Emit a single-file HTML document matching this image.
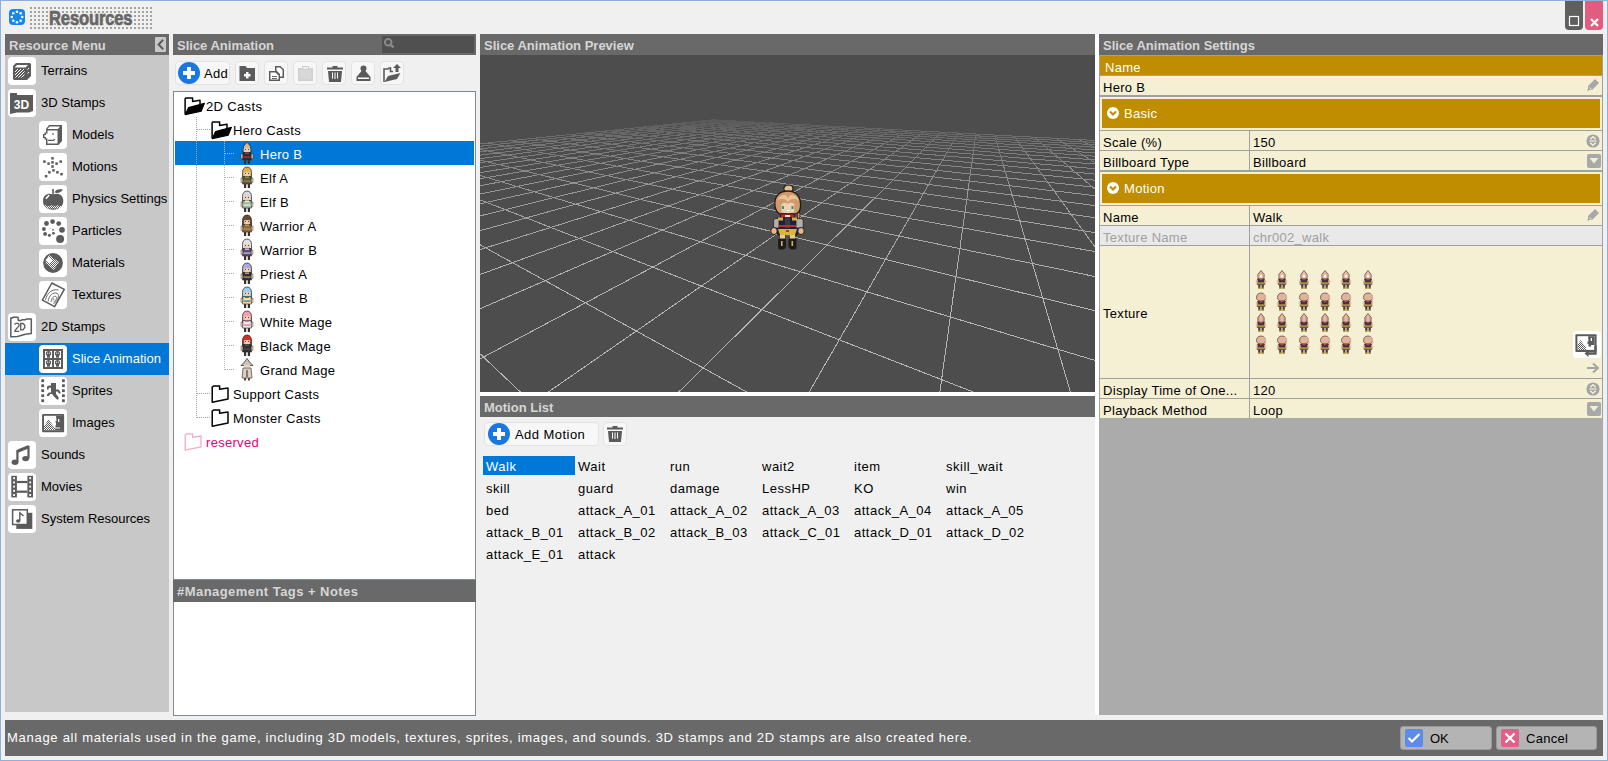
<!DOCTYPE html>
<html><head><meta charset="utf-8"><style>
*{margin:0;padding:0;box-sizing:border-box}
html,body{width:1608px;height:761px;overflow:hidden;background:#f0f0f0;font-family:"Liberation Sans",sans-serif;font-size:13px;color:#000}
.a{position:absolute;display:block}
.win{position:absolute;left:0;top:0;width:1608px;height:761px;border:1px solid #8fb0d8;background:#f0f0f0}
.hdr{position:absolute;height:21px;background:#696969;color:#d6d6d6;font-weight:bold;font-size:13px;line-height:23px;padding-left:4px;white-space:nowrap}
.t{position:absolute;white-space:nowrap;line-height:18px}
</style></head><body>
<div class="win"></div>
<svg class="a" style="left:9px;top:9px" width="16" height="16" viewBox="0 0 16 16"><rect width="16" height="16" rx="4" fill="#1486f2"/><circle cx="13.20" cy="8.00" r="1.3" fill="#fff"/><circle cx="11.68" cy="11.68" r="1.3" fill="#fff"/><circle cx="8.00" cy="13.20" r="1.3" fill="#fff"/><circle cx="4.32" cy="11.68" r="1.3" fill="#fff"/><circle cx="2.80" cy="8.00" r="1.3" fill="#fff"/><circle cx="4.32" cy="4.32" r="1.3" fill="#fff"/><circle cx="8.00" cy="2.80" r="1.3" fill="#fff"/><circle cx="11.68" cy="4.32" r="1.3" fill="#fff"/></svg>
<svg class="a" style="left:29px;top:6px" width="124" height="25" fill="#a2a2a2"><rect x="1" y="1" width="2" height="2"/><rect x="5" y="1" width="2" height="2"/><rect x="9" y="1" width="2" height="2"/><rect x="13" y="1" width="2" height="2"/><rect x="17" y="1" width="2" height="2"/><rect x="21" y="1" width="2" height="2"/><rect x="25" y="1" width="2" height="2"/><rect x="29" y="1" width="2" height="2"/><rect x="33" y="1" width="2" height="2"/><rect x="37" y="1" width="2" height="2"/><rect x="41" y="1" width="2" height="2"/><rect x="45" y="1" width="2" height="2"/><rect x="49" y="1" width="2" height="2"/><rect x="53" y="1" width="2" height="2"/><rect x="57" y="1" width="2" height="2"/><rect x="61" y="1" width="2" height="2"/><rect x="65" y="1" width="2" height="2"/><rect x="69" y="1" width="2" height="2"/><rect x="73" y="1" width="2" height="2"/><rect x="77" y="1" width="2" height="2"/><rect x="81" y="1" width="2" height="2"/><rect x="85" y="1" width="2" height="2"/><rect x="89" y="1" width="2" height="2"/><rect x="93" y="1" width="2" height="2"/><rect x="97" y="1" width="2" height="2"/><rect x="101" y="1" width="2" height="2"/><rect x="105" y="1" width="2" height="2"/><rect x="109" y="1" width="2" height="2"/><rect x="113" y="1" width="2" height="2"/><rect x="117" y="1" width="2" height="2"/><rect x="121" y="1" width="2" height="2"/><rect x="1" y="5" width="2" height="2"/><rect x="5" y="5" width="2" height="2"/><rect x="9" y="5" width="2" height="2"/><rect x="13" y="5" width="2" height="2"/><rect x="17" y="5" width="2" height="2"/><rect x="21" y="5" width="2" height="2"/><rect x="25" y="5" width="2" height="2"/><rect x="29" y="5" width="2" height="2"/><rect x="33" y="5" width="2" height="2"/><rect x="37" y="5" width="2" height="2"/><rect x="41" y="5" width="2" height="2"/><rect x="45" y="5" width="2" height="2"/><rect x="49" y="5" width="2" height="2"/><rect x="53" y="5" width="2" height="2"/><rect x="57" y="5" width="2" height="2"/><rect x="61" y="5" width="2" height="2"/><rect x="65" y="5" width="2" height="2"/><rect x="69" y="5" width="2" height="2"/><rect x="73" y="5" width="2" height="2"/><rect x="77" y="5" width="2" height="2"/><rect x="81" y="5" width="2" height="2"/><rect x="85" y="5" width="2" height="2"/><rect x="89" y="5" width="2" height="2"/><rect x="93" y="5" width="2" height="2"/><rect x="97" y="5" width="2" height="2"/><rect x="101" y="5" width="2" height="2"/><rect x="105" y="5" width="2" height="2"/><rect x="109" y="5" width="2" height="2"/><rect x="113" y="5" width="2" height="2"/><rect x="117" y="5" width="2" height="2"/><rect x="121" y="5" width="2" height="2"/><rect x="1" y="9" width="2" height="2"/><rect x="5" y="9" width="2" height="2"/><rect x="9" y="9" width="2" height="2"/><rect x="13" y="9" width="2" height="2"/><rect x="17" y="9" width="2" height="2"/><rect x="21" y="9" width="2" height="2"/><rect x="25" y="9" width="2" height="2"/><rect x="29" y="9" width="2" height="2"/><rect x="33" y="9" width="2" height="2"/><rect x="37" y="9" width="2" height="2"/><rect x="41" y="9" width="2" height="2"/><rect x="45" y="9" width="2" height="2"/><rect x="49" y="9" width="2" height="2"/><rect x="53" y="9" width="2" height="2"/><rect x="57" y="9" width="2" height="2"/><rect x="61" y="9" width="2" height="2"/><rect x="65" y="9" width="2" height="2"/><rect x="69" y="9" width="2" height="2"/><rect x="73" y="9" width="2" height="2"/><rect x="77" y="9" width="2" height="2"/><rect x="81" y="9" width="2" height="2"/><rect x="85" y="9" width="2" height="2"/><rect x="89" y="9" width="2" height="2"/><rect x="93" y="9" width="2" height="2"/><rect x="97" y="9" width="2" height="2"/><rect x="101" y="9" width="2" height="2"/><rect x="105" y="9" width="2" height="2"/><rect x="109" y="9" width="2" height="2"/><rect x="113" y="9" width="2" height="2"/><rect x="117" y="9" width="2" height="2"/><rect x="121" y="9" width="2" height="2"/><rect x="1" y="13" width="2" height="2"/><rect x="5" y="13" width="2" height="2"/><rect x="9" y="13" width="2" height="2"/><rect x="13" y="13" width="2" height="2"/><rect x="17" y="13" width="2" height="2"/><rect x="21" y="13" width="2" height="2"/><rect x="25" y="13" width="2" height="2"/><rect x="29" y="13" width="2" height="2"/><rect x="33" y="13" width="2" height="2"/><rect x="37" y="13" width="2" height="2"/><rect x="41" y="13" width="2" height="2"/><rect x="45" y="13" width="2" height="2"/><rect x="49" y="13" width="2" height="2"/><rect x="53" y="13" width="2" height="2"/><rect x="57" y="13" width="2" height="2"/><rect x="61" y="13" width="2" height="2"/><rect x="65" y="13" width="2" height="2"/><rect x="69" y="13" width="2" height="2"/><rect x="73" y="13" width="2" height="2"/><rect x="77" y="13" width="2" height="2"/><rect x="81" y="13" width="2" height="2"/><rect x="85" y="13" width="2" height="2"/><rect x="89" y="13" width="2" height="2"/><rect x="93" y="13" width="2" height="2"/><rect x="97" y="13" width="2" height="2"/><rect x="101" y="13" width="2" height="2"/><rect x="105" y="13" width="2" height="2"/><rect x="109" y="13" width="2" height="2"/><rect x="113" y="13" width="2" height="2"/><rect x="117" y="13" width="2" height="2"/><rect x="121" y="13" width="2" height="2"/><rect x="1" y="17" width="2" height="2"/><rect x="5" y="17" width="2" height="2"/><rect x="9" y="17" width="2" height="2"/><rect x="13" y="17" width="2" height="2"/><rect x="17" y="17" width="2" height="2"/><rect x="21" y="17" width="2" height="2"/><rect x="25" y="17" width="2" height="2"/><rect x="29" y="17" width="2" height="2"/><rect x="33" y="17" width="2" height="2"/><rect x="37" y="17" width="2" height="2"/><rect x="41" y="17" width="2" height="2"/><rect x="45" y="17" width="2" height="2"/><rect x="49" y="17" width="2" height="2"/><rect x="53" y="17" width="2" height="2"/><rect x="57" y="17" width="2" height="2"/><rect x="61" y="17" width="2" height="2"/><rect x="65" y="17" width="2" height="2"/><rect x="69" y="17" width="2" height="2"/><rect x="73" y="17" width="2" height="2"/><rect x="77" y="17" width="2" height="2"/><rect x="81" y="17" width="2" height="2"/><rect x="85" y="17" width="2" height="2"/><rect x="89" y="17" width="2" height="2"/><rect x="93" y="17" width="2" height="2"/><rect x="97" y="17" width="2" height="2"/><rect x="101" y="17" width="2" height="2"/><rect x="105" y="17" width="2" height="2"/><rect x="109" y="17" width="2" height="2"/><rect x="113" y="17" width="2" height="2"/><rect x="117" y="17" width="2" height="2"/><rect x="121" y="17" width="2" height="2"/><rect x="1" y="21" width="2" height="2"/><rect x="5" y="21" width="2" height="2"/><rect x="9" y="21" width="2" height="2"/><rect x="13" y="21" width="2" height="2"/><rect x="17" y="21" width="2" height="2"/><rect x="21" y="21" width="2" height="2"/><rect x="25" y="21" width="2" height="2"/><rect x="29" y="21" width="2" height="2"/><rect x="33" y="21" width="2" height="2"/><rect x="37" y="21" width="2" height="2"/><rect x="41" y="21" width="2" height="2"/><rect x="45" y="21" width="2" height="2"/><rect x="49" y="21" width="2" height="2"/><rect x="53" y="21" width="2" height="2"/><rect x="57" y="21" width="2" height="2"/><rect x="61" y="21" width="2" height="2"/><rect x="65" y="21" width="2" height="2"/><rect x="69" y="21" width="2" height="2"/><rect x="73" y="21" width="2" height="2"/><rect x="77" y="21" width="2" height="2"/><rect x="81" y="21" width="2" height="2"/><rect x="85" y="21" width="2" height="2"/><rect x="89" y="21" width="2" height="2"/><rect x="93" y="21" width="2" height="2"/><rect x="97" y="21" width="2" height="2"/><rect x="101" y="21" width="2" height="2"/><rect x="105" y="21" width="2" height="2"/><rect x="109" y="21" width="2" height="2"/><rect x="113" y="21" width="2" height="2"/><rect x="117" y="21" width="2" height="2"/><rect x="121" y="21" width="2" height="2"/></svg>
<div class="t" style="left:49px;top:6px;font-size:20px;font-weight:bold;color:#666;line-height:24px;letter-spacing:-0.2px;transform:scaleX(0.83);transform-origin:left;-webkit-text-stroke:0.7px #666;text-shadow:1px 0 #f0f0f0,-1px 0 #f0f0f0,0 1px #f0f0f0,0 -1px #f0f0f0,1px 1px #f0f0f0,-1px -1px #f0f0f0,1px -1px #f0f0f0,-1px 1px #f0f0f0">Resources</div>
<svg class="a" style="left:1565px;top:1px" width="18" height="29"><path d="M0 0H18V25A4 4 0 0 1 14 29H4A4 4 0 0 1 0 25Z" fill="#5f5f5f"/><rect x="4.5" y="15.5" width="9" height="9" fill="none" stroke="#fff" stroke-width="1.2"/></svg>
<svg class="a" style="left:1585px;top:1px" width="18" height="29"><path d="M0 0H18V25A4 4 0 0 1 14 29H4A4 4 0 0 1 0 25Z" fill="#e05c80"/><path d="M6 18L13 25M13 18L6 25" stroke="#fff" stroke-width="2.2"/></svg>
<div class="hdr" style="left:5px;top:34px;width:164px">Resource Menu</div>
<div class="a" style="left:155px;top:37px;width:11px;height:15px;background:#c8c8c8;border-radius:1px"></div>
<svg class="a" style="left:155px;top:37px" width="11" height="15"><path d="M8.2 2.8L3.6 7.5L8.2 12.2" stroke="#5b5b5b" stroke-width="2" fill="none"/></svg>
<div class="a" style="left:5px;top:55px;width:164px;height:657px;background:#c8c8c8"></div>
<svg class="a" style="left:8px;top:57px" width="28" height="28" viewBox="0 0 28 28"><rect x="0" y="0" width="28" height="28" rx="4" fill="#fff"/><path d="M8 6H22L23 7V19L19 23H6L5 22V9Z" fill="#5b5b5b"/>
<path d="M9 8H20L17.5 10.5H6.5Z" fill="#fff"/>
<g stroke="#fff" stroke-width="1"><path d="M7 15L10 12M7 18L13 12M7.5 20.5L16 12M10.5 20.5L16.5 14.5M13.5 20.5L16.5 17.5"/><path d="M19.5 12.5L21 11M19.5 16.5L21 15"/></g></svg>
<div class="t" style="left:41px;top:62px;color:#000">Terrains</div>
<svg class="a" style="left:8px;top:89px" width="28" height="28" viewBox="0 0 28 28"><rect x="0" y="0" width="28" height="28" rx="4" fill="#fff"/><path d="M2 4H9V6H25V22L21 23.5H9L2 25Z" fill="#5b5b5b"/>
<text x="13.5" y="19.5" font-family="Liberation Sans" font-weight="bold" font-size="12" fill="#fff" text-anchor="middle">3D</text></svg>
<div class="t" style="left:41px;top:94px;color:#000">3D Stamps</div>
<svg class="a" style="left:39px;top:121px" width="28" height="28" viewBox="0 0 28 28"><rect x="0" y="0" width="28" height="28" rx="4" fill="#fff"/><path d="M10 4H23V20L19.5 24H7V18.5H5.5V17H4V13H5.5V11.5H7V8Z" fill="#5b5b5b"/>
<path d="M8.5 9.5H18.5V22.5H8.5V17.5H7V16H5.5V14H7V12.5H8.5Z" fill="#fff"/><path d="M10.5 5.5H21L19 8H8.5Z" fill="#fff"/>
<rect x="13.3" y="12.3" width="1.5" height="1.5" fill="#5b5b5b"/><path d="M9 19.3H14.5L16 18.3" stroke="#5b5b5b" stroke-width="1.2" fill="none"/></svg>
<div class="t" style="left:72px;top:126px;color:#000">Models</div>
<svg class="a" style="left:39px;top:153px" width="28" height="28" viewBox="0 0 28 28"><rect x="0" y="0" width="28" height="28" rx="4" fill="#fff"/><rect x="12.25" y="4.05" width="2.5" height="2.5" fill="#5b5b5b"/><rect x="4.15" y="7.35" width="2.5" height="2.5" fill="#5b5b5b"/><rect x="8.35" y="9.35" width="2.5" height="2.5" fill="#5b5b5b"/><rect x="12.25" y="8.15" width="2.5" height="2.5" fill="#5b5b5b"/><rect x="16.35" y="9.35" width="2.5" height="2.5" fill="#5b5b5b"/><rect x="20.45" y="7.35" width="2.5" height="2.5" fill="#5b5b5b"/><rect x="12.25" y="12.25" width="2.5" height="2.5" fill="#5b5b5b"/><rect x="13.25" y="16.15" width="2.5" height="2.5" fill="#5b5b5b"/><rect x="9.15" y="18.05" width="2.5" height="2.5" fill="#5b5b5b"/><rect x="17.15" y="18.05" width="2.5" height="2.5" fill="#5b5b5b"/><rect x="5.85" y="21.95" width="2.5" height="2.5" fill="#5b5b5b"/><rect x="21.25" y="19.95" width="2.5" height="2.5" fill="#5b5b5b"/></svg>
<div class="t" style="left:72px;top:158px;color:#000">Motions</div>
<svg class="a" style="left:39px;top:185px" width="28" height="28" viewBox="0 0 28 28"><rect x="0" y="0" width="28" height="28" rx="4" fill="#fff"/><defs><pattern id="dith" width="2" height="2" patternUnits="userSpaceOnUse"><rect x="0" y="0" width="1" height="1" fill="#fff"/><rect x="1" y="1" width="1" height="1" fill="#fff"/></pattern></defs>
<rect x="13.2" y="4" width="1.6" height="5.5" fill="#5b5b5b"/><path d="M15.5 7.5C16.5 4.5 19.5 3.5 24 4.5C22 7.5 19 8.5 15.5 7.5Z" fill="#5b5b5b"/>
<path d="M14 9.5C10 7.5 4 9 4 16C4 21 7.5 24.7 14 24.7C20.5 24.7 24.3 21 24.3 16C24.3 9 18 7.5 14 9.5Z" fill="#5b5b5b"/>
<path d="M7.3 13.2L9.8 10.5" stroke="#fff" stroke-width="1.6" stroke-linecap="round"/>
<path d="M5 21.5L6.5 20L8 21.5L9.5 20L11 21.5L12.5 20L14 21.5L15.5 20L17 21.5L18.5 20L20 21.5L21.5 20L23 21.5V23.5H5Z" fill="url(#dith)"/></svg>
<div class="t" style="left:72px;top:190px;color:#000">Physics Settings</div>
<svg class="a" style="left:39px;top:217px" width="28" height="28" viewBox="0 0 28 28"><rect x="0" y="0" width="28" height="28" rx="4" fill="#fff"/><circle cx="7.5" cy="6.5" r="2.4" fill="#5b5b5b"/><circle cx="13.6" cy="4.6" r="2.4" fill="#5b5b5b"/><circle cx="19.7" cy="6.6" r="2.4" fill="#5b5b5b"/>
<circle cx="4.9" cy="12" r="1.9" fill="#5b5b5b"/><circle cx="23" cy="12.8" r="2.9" fill="#5b5b5b"/><circle cx="6.1" cy="16.9" r="1.9" fill="#5b5b5b"/>
<circle cx="10.4" cy="18.3" r="1.5" fill="#5b5b5b"/><circle cx="14.4" cy="16.3" r="1.4" fill="#5b5b5b"/><circle cx="14" cy="12.8" r="0.9" fill="#5b5b5b"/><circle cx="11.2" cy="11.6" r="0.45" fill="#5b5b5b"/>
<circle cx="21.1" cy="21.9" r="4" fill="#5b5b5b"/></svg>
<div class="t" style="left:72px;top:222px;color:#000">Particles</div>
<svg class="a" style="left:39px;top:249px" width="28" height="28" viewBox="0 0 28 28"><rect x="0" y="0" width="28" height="28" rx="4" fill="#fff"/><defs><pattern id="dith2" width="2" height="2" patternUnits="userSpaceOnUse"><rect x="0" y="0" width="1" height="1" fill="#fff"/><rect x="1" y="1" width="1" height="1" fill="#fff"/></pattern></defs>
<circle cx="14" cy="14" r="9.9" fill="#5b5b5b"/>
<path d="M10 6L20 13L15 21L6 14Z" fill="url(#dith2)"/><path d="M10 7.5L13.5 11L10 14.5L6.5 11Z" fill="#fff"/></svg>
<div class="t" style="left:72px;top:254px;color:#000">Materials</div>
<svg class="a" style="left:39px;top:281px" width="28" height="28" viewBox="0 0 28 28"><rect x="0" y="0" width="28" height="28" rx="4" fill="#fff"/><path d="M12.8 2L25.3 8.4L15.6 25.6L3.4 19.1Z" fill="none" stroke="#5b5b5b" stroke-width="1.5" stroke-linejoin="round"/>
<g fill="none" stroke="#5b5b5b" stroke-width="0.9"><path d="M6.5 19C8 12 13 7.5 19.5 9"/><path d="M9 20.5C10 14.5 14 10.5 18.5 12.5C21 14 18.5 21 14.5 22.5"/><path d="M12 21C12.5 17 15 14.5 17 15.5C18.5 16.5 16.5 20.5 14.5 21"/><path d="M14.5 17.5L14 19.5"/></g></svg>
<div class="t" style="left:72px;top:286px;color:#000">Textures</div>
<svg class="a" style="left:8px;top:313px" width="28" height="28" viewBox="0 0 28 28"><rect x="0" y="0" width="28" height="28" rx="4" fill="#fff"/><path d="M2.8 23.8V5H4.4L5 4.2H10L10.3 7.5H13L14 6.8H17L18.5 6H23.3V20.5L19 21L16.5 21.5L13 22.5L9.5 23.5Z" fill="none" stroke="#5b5b5b" stroke-width="1.5" stroke-linejoin="round"/>
<path d="M6.5 11.5L8 10.3H10L11 11.2V12.8L7 17.5V18.3H11.3" fill="none" stroke="#5b5b5b" stroke-width="1.3"/><path d="M12.7 10.5H15L16.8 12.3V14.5L15 16.8H12.7Z" fill="none" stroke="#5b5b5b" stroke-width="1.3"/></svg>
<div class="t" style="left:41px;top:318px;color:#000">2D Stamps</div>
<div class="a" style="left:5px;top:343px;width:164px;height:32px;background:#0078d7"></div>
<svg class="a" style="left:39px;top:345px" width="28" height="28" viewBox="0 0 28 28"><rect x="0" y="0" width="28" height="28" rx="4" fill="#fff"/><rect x="4" y="4" width="20" height="20" fill="#5b5b5b"/><rect x="6" y="6" width="7" height="7" fill="#fff"/><rect x="15" y="6" width="7" height="7" fill="#fff"/><rect x="6" y="15" width="7" height="7" fill="#fff"/><rect x="15" y="15" width="7" height="7" fill="#fff"/>
<circle cx="9.5" cy="8.5" r="2.6" fill="#5b5b5b"/><rect x="8.0" y="10.5" width="3" height="2.2" fill="#5b5b5b"/><rect x="8.1" y="7.7" width="1" height="1" fill="#fff"/><rect x="9.9" y="7.7" width="1" height="1" fill="#fff"/><circle cx="18.5" cy="8.5" r="2.6" fill="#5b5b5b"/><rect x="17.0" y="10.5" width="3" height="2.2" fill="#5b5b5b"/><rect x="17.1" y="7.7" width="1" height="1" fill="#fff"/><rect x="18.9" y="7.7" width="1" height="1" fill="#fff"/><circle cx="9.5" cy="17.5" r="2.6" fill="#5b5b5b"/><rect x="8.0" y="19.5" width="3" height="2.2" fill="#5b5b5b"/><rect x="8.1" y="16.7" width="1" height="1" fill="#fff"/><rect x="9.9" y="16.7" width="1" height="1" fill="#fff"/><circle cx="18.5" cy="17.5" r="2.6" fill="#5b5b5b"/><rect x="17.0" y="19.5" width="3" height="2.2" fill="#5b5b5b"/><rect x="17.1" y="16.7" width="1" height="1" fill="#fff"/><rect x="18.9" y="16.7" width="1" height="1" fill="#fff"/></svg>
<div class="t" style="left:72px;top:350px;color:#fff">Slice Animation</div>
<svg class="a" style="left:39px;top:377px" width="28" height="28" viewBox="0 0 28 28"><rect x="0" y="0" width="28" height="28" rx="4" fill="#fff"/><rect x="2.3" y="2.3" width="2.8" height="2.8" fill="#5b5b5b"/><rect x="23" y="2.3" width="2.8" height="2.8" fill="#5b5b5b"/><rect x="2.3" y="7.3" width="2.8" height="2.8" fill="#5b5b5b"/><rect x="23" y="7.3" width="2.8" height="2.8" fill="#5b5b5b"/><rect x="2.3" y="12.3" width="2.8" height="2.8" fill="#5b5b5b"/><rect x="23" y="12.3" width="2.8" height="2.8" fill="#5b5b5b"/><rect x="2.3" y="17.3" width="2.8" height="2.8" fill="#5b5b5b"/><rect x="23" y="17.3" width="2.8" height="2.8" fill="#5b5b5b"/><rect x="2.3" y="22.3" width="2.8" height="2.8" fill="#5b5b5b"/><rect x="23" y="22.3" width="2.8" height="2.8" fill="#5b5b5b"/><path d="M12 6H17V12.5L19.5 12.5L21.5 15V16.5H20L18.5 14.5H17V17L19.5 20V22.5H18L15.5 20L13 17H11L10 19H8V17.5L10 15.5H12V11L10 10.5L9.5 12.5H8V9.5L10 8.5H12Z" fill="#5b5b5b"/></svg>
<div class="t" style="left:72px;top:382px;color:#000">Sprites</div>
<svg class="a" style="left:39px;top:409px" width="28" height="28" viewBox="0 0 28 28"><rect x="0" y="0" width="28" height="28" rx="4" fill="#fff"/><defs><pattern id="dith3" width="2" height="2" patternUnits="userSpaceOnUse"><rect x="0" y="0" width="1" height="1" fill="#5b5b5b"/><rect x="1" y="1" width="1" height="1" fill="#5b5b5b"/></pattern></defs>
<rect x="3.1" y="4.9" width="22" height="18.3" rx="1" fill="#5b5b5b"/><rect x="5" y="6.8" width="18" height="14.4" fill="#fff"/>
<path d="M5 21.2V17L9.5 10.5L16 19V21.2Z" fill="url(#dith3)"/><path d="M17 6.8H23V21.2H16V19.5H21V18.5H16.5V16H17V13.5H16.5V12H17.5Z" fill="#5b5b5b"/><rect x="19" y="10" width="1.3" height="3" fill="#fff"/></svg>
<div class="t" style="left:72px;top:414px;color:#000">Images</div>
<svg class="a" style="left:8px;top:441px" width="28" height="28" viewBox="0 0 28 28"><rect x="0" y="0" width="28" height="28" rx="4" fill="#fff"/><path d="M9.5 8.5L20.6 4V7.5L9.5 12Z" fill="#5b5b5b"/><rect x="8.3" y="9" width="2.2" height="12" fill="#5b5b5b"/><rect x="19.4" y="5" width="2.2" height="12.5" fill="#5b5b5b"/>
<ellipse cx="7" cy="21.2" rx="3.4" ry="2.7" fill="#5b5b5b"/><ellipse cx="17.6" cy="17.6" rx="3.4" ry="2.7" fill="#5b5b5b"/></svg>
<div class="t" style="left:41px;top:446px;color:#000">Sounds</div>
<svg class="a" style="left:8px;top:473px" width="28" height="28" viewBox="0 0 28 28"><rect x="0" y="0" width="28" height="28" rx="4" fill="#fff"/><rect x="3.3" y="2.8" width="5.6" height="21.6" fill="#5b5b5b"/><rect x="19.4" y="2.8" width="5.6" height="21.6" fill="#5b5b5b"/><rect x="5.2" y="4.2" width="1.8" height="2" fill="#fff"/><rect x="21.3" y="4.2" width="1.8" height="2" fill="#fff"/><rect x="5.2" y="8.4" width="1.8" height="2" fill="#fff"/><rect x="21.3" y="8.4" width="1.8" height="2" fill="#fff"/><rect x="5.2" y="12.6" width="1.8" height="2" fill="#fff"/><rect x="21.3" y="12.6" width="1.8" height="2" fill="#fff"/><rect x="5.2" y="16.8" width="1.8" height="2" fill="#fff"/><rect x="21.3" y="16.8" width="1.8" height="2" fill="#fff"/><rect x="5.2" y="21" width="1.8" height="2" fill="#fff"/><rect x="21.3" y="21" width="1.8" height="2" fill="#fff"/><rect x="8.9" y="7.9" width="10.5" height="2.2" fill="#5b5b5b"/><rect x="8.9" y="17.6" width="10.5" height="2.2" fill="#5b5b5b"/></svg>
<div class="t" style="left:41px;top:478px;color:#000">Movies</div>
<svg class="a" style="left:8px;top:505px" width="28" height="28" viewBox="0 0 28 28"><rect x="0" y="0" width="28" height="28" rx="4" fill="#fff"/><rect x="8.3" y="7.8" width="16" height="16.1" fill="#5b5b5b"/><rect x="4.6" y="4.8" width="14.7" height="14.7" fill="#fff" stroke="#5b5b5b" stroke-width="1.5"/>
<path d="M11.8 16V7.8L15.5 11" stroke="#5b5b5b" stroke-width="1.4" fill="none"/><ellipse cx="10.2" cy="16" rx="2.2" ry="1.8" fill="#5b5b5b"/></svg>
<div class="t" style="left:41px;top:510px;color:#000">System Resources</div>
<div class="hdr" style="left:173px;top:34px;width:303px">Slice Animation</div>
<div class="a" style="left:382px;top:36px;width:92px;height:17px;background:#505050"></div>
<svg class="a" style="left:383px;top:37px" width="14" height="14" viewBox="0 0 14 14"><circle cx="5.2" cy="5.2" r="3.3" fill="none" stroke="#8a8a8a" stroke-width="2"/><path d="M7.8 7.8L10.5 10.5" stroke="#8a8a8a" stroke-width="2.4"/></svg>
<div class="a" style="left:175px;top:61px;width:55px;height:24px;background:#f7f7f7;border:1px solid #e3e3e3;border-radius:4px"></div>
<svg class="a" style="left:178px;top:62px" width="22" height="22" viewBox="0 0 22 22"><circle cx="11" cy="11" r="11" fill="#1877e0"/><path d="M9 5H13V9H17V13H13V17H9V13H5V9H9Z" fill="#fff"/></svg>
<div class="t" style="left:204px;top:65px;letter-spacing:0.3px">Add</div>
<div class="a" style="left:235px;top:61px;width:24px;height:24px;background:#f7f7f7;border:1px solid #e3e3e3;border-radius:4px"></div>
<div class="a" style="left:264px;top:61px;width:24px;height:24px;background:#f7f7f7;border:1px solid #e3e3e3;border-radius:4px"></div>
<div class="a" style="left:293px;top:61px;width:24px;height:24px;background:#f7f7f7;border:1px solid #e3e3e3;border-radius:4px"></div>
<div class="a" style="left:322px;top:61px;width:24px;height:24px;background:#f7f7f7;border:1px solid #e3e3e3;border-radius:4px"></div>
<div class="a" style="left:351px;top:61px;width:24px;height:24px;background:#f7f7f7;border:1px solid #e3e3e3;border-radius:4px"></div>
<div class="a" style="left:380px;top:61px;width:24px;height:24px;background:#f7f7f7;border:1px solid #e3e3e3;border-radius:4px"></div>
<svg class="a" style="left:239px;top:65px" width="17" height="17" viewBox="0 0 17 17"><path d="M0.5 1H6.5L8 3H16V16H0.5Z" fill="#5b5b5b"/><path d="M7 7H9.5V9H11.5V11.5H9.5V13.5H7V11.5H5V9H7Z" fill="#fff"/></svg>
<svg class="a" style="left:268px;top:65px" width="17" height="17" viewBox="0 0 17 17"><path d="M7 1H12.5L16 4.5V13H12V16H1V6H7Z" fill="#5b5b5b"/><path d="M8.5 2.5H12L14.5 5V11.5H12V9L9 6H8.5Z" fill="#fff"/><path d="M2.5 7.5H7.5L10.5 10.5V14.5H2.5Z" fill="#fff"/><rect x="4" y="11" width="5" height="0.9" fill="#5b5b5b"/><rect x="4" y="13" width="5" height="0.9" fill="#5b5b5b"/></svg>
<svg class="a" style="left:297px;top:65px" width="17" height="17" viewBox="0 0 17 17"><rect x="1" y="3" width="15" height="13" fill="#cfcfcf"/><rect x="2.5" y="4.5" width="12" height="10" fill="#d8d8d8"/><rect x="5" y="1" width="7" height="4" fill="#cfcfcf"/><rect x="6" y="2" width="5" height="2" fill="#ececec"/></svg>
<svg class="a" style="left:326px;top:65px" width="18" height="18" viewBox="0 0 18 18"><rect x="6.5" y="1" width="5" height="2" fill="#5b5b5b"/><rect x="1" y="2.5" width="16" height="2" fill="#5b5b5b"/><path d="M2 6H16L15 17H3Z" fill="#5b5b5b"/><rect x="6" y="7.5" width="1" height="6" fill="#fff"/><rect x="8.5" y="7.5" width="1" height="6.5" fill="#fff"/><rect x="11" y="7.5" width="1" height="6" fill="#fff"/></svg>
<svg class="a" style="left:355px;top:65px" width="17" height="17" viewBox="0 0 17 17"><circle cx="8.5" cy="3.5" r="3" fill="#5b5b5b"/><path d="M6.5 6H10.5L15.5 12V16H1.5V12Z" fill="#5b5b5b"/><rect x="3" y="12.5" width="11" height="1.5" fill="#fff"/></svg>
<svg class="a" style="left:383px;top:63px" width="19" height="20" viewBox="0 0 19 20"><path d="M1 19V6H5L6 5H7.5V8.5H10" fill="none" stroke="#5b5b5b" stroke-width="1.6"/><path d="M1.5 19L5 13L17.5 10L14 16Z" fill="#5b5b5b"/><path d="M14 1L18 5H15.5V9H12.5V5H10Z" fill="#5b5b5b"/></svg>
<div class="a" style="left:173px;top:91px;width:303px;height:489px;background:#fff;border:1px solid #7f8893"></div>
<div class="a" style="left:175px;top:141px;width:299px;height:24px;background:#0078d7"></div>
<div class="a" style="left:196px;top:117px;width:1px;height:302px;background:repeating-linear-gradient(to bottom,#a0a0a0 0 1px,transparent 1px 2px)"></div>
<div class="a" style="left:197px;top:129px;width:14px;height:1px;background:repeating-linear-gradient(to right,#a0a0a0 0 1px,transparent 1px 2px)"></div>
<div class="a" style="left:197px;top:393px;width:14px;height:1px;background:repeating-linear-gradient(to right,#a0a0a0 0 1px,transparent 1px 2px)"></div>
<div class="a" style="left:197px;top:417px;width:14px;height:1px;background:repeating-linear-gradient(to right,#a0a0a0 0 1px,transparent 1px 2px)"></div>
<div class="a" style="left:224px;top:141px;width:1px;height:229px;background:repeating-linear-gradient(to bottom,#b8b8b8 0 1px,transparent 1px 2px)"></div>
<svg class="a" style="left:183px;top:97px" width="23" height="20" viewBox="0 0 23 20"><path d="M2.1 17.3V1.7L2.8 1H9.6V4.6L17 3.2V7.5" fill="none" stroke="#000" stroke-width="1.5" stroke-linejoin="round"/><path d="M2.3 17.6L5.6 10.6L21.4 6.2L18.2 14.3Z" fill="#000" stroke="#000" stroke-width="1.1" stroke-linejoin="round"/></svg>
<div class="t" style="left:206px;top:98px;letter-spacing:0.35px">2D Casts</div>
<svg class="a" style="left:210px;top:121px" width="23" height="20" viewBox="0 0 23 20"><path d="M2.1 17.3V1.7L2.8 1H9.6V4.6L17 3.2V7.5" fill="none" stroke="#000" stroke-width="1.5" stroke-linejoin="round"/><path d="M2.3 17.6L5.6 10.6L21.4 6.2L18.2 14.3Z" fill="#000" stroke="#000" stroke-width="1.1" stroke-linejoin="round"/></svg>
<div class="t" style="left:233px;top:122px;letter-spacing:0.3px">Hero Casts</div>
<div class="a" style="left:225px;top:153px;width:10px;height:1px;background:repeating-linear-gradient(to right,#b8b8b8 0 1px,transparent 1px 2px)"></div>
<svg class="a" style="left:240px;top:142px" width="14" height="23" viewBox="0 0 14 23"><path d="M7 0.5C9.5 2 11 5 11 8.5V10H3V8.5C3 5 4.5 2 7 0.5Z" fill="#e0b490" stroke="#2a2222" stroke-width="0.7"/><rect x="4.2" y="5.5" width="5.6" height="4.5" fill="#f0d0b0"/><rect x="4" y="4.5" width="6" height="1.6" fill="#e0b490"/><rect x="5" y="7" width="1" height="1" fill="#305060"/><rect x="8" y="7" width="1" height="1" fill="#305060"/><path d="M3 10.5H11L11.5 18H2.5Z" fill="#2a2a3a" stroke="#2a2222" stroke-width="0.6"/><rect x="5" y="10.5" width="4" height="1.5" fill="#c03030"/><rect x="3.5" y="14.5" width="7" height="1.2" fill="#c03030"/><rect x="1" y="12" width="1.8" height="4.5" fill="#f0d0b0" stroke="#2a2222" stroke-width="0.4"/><rect x="11.2" y="12" width="1.8" height="4.5" fill="#f0d0b0" stroke="#2a2222" stroke-width="0.4"/><rect x="4" y="18" width="2.2" height="4" fill="#3a3030"/><rect x="7.8" y="18" width="2.2" height="4" fill="#3a3030"/></svg>
<div class="t" style="left:260px;top:146px;letter-spacing:0.3px;color:#fff">Hero B</div>
<div class="a" style="left:225px;top:177px;width:10px;height:1px;background:repeating-linear-gradient(to right,#a8a8a8 0 1px,transparent 1px 2px)"></div>
<svg class="a" style="left:240px;top:166px" width="14" height="23" viewBox="0 0 14 23"><path d="M7 1C10 1 11.5 3.5 11.5 6.5V13H10V10H4V13H2.5V6.5C2.5 3.5 4 1 7 1Z" fill="#e0b050" stroke="#2a2222" stroke-width="0.7"/><rect x="4.2" y="5.5" width="5.6" height="4.5" fill="#f0d0b0"/><rect x="4" y="4.5" width="6" height="1.6" fill="#e0b050"/><rect x="5" y="7" width="1" height="1" fill="#305060"/><rect x="8" y="7" width="1" height="1" fill="#305060"/><path d="M3 10.5H11L11.5 18H2.5Z" fill="#5a5a38" stroke="#2a2222" stroke-width="0.6"/><rect x="5" y="10.5" width="4" height="1.5" fill="#a08a40"/><rect x="3.5" y="14.5" width="7" height="1.2" fill="#a08a40"/><rect x="1" y="12" width="1.8" height="4.5" fill="#f0d0b0" stroke="#2a2222" stroke-width="0.4"/><rect x="11.2" y="12" width="1.8" height="4.5" fill="#f0d0b0" stroke="#2a2222" stroke-width="0.4"/><rect x="4" y="18" width="2.2" height="4" fill="#3a3030"/><rect x="7.8" y="18" width="2.2" height="4" fill="#3a3030"/></svg>
<div class="t" style="left:260px;top:170px;letter-spacing:0.3px;color:#000">Elf A</div>
<div class="a" style="left:225px;top:201px;width:10px;height:1px;background:repeating-linear-gradient(to right,#a8a8a8 0 1px,transparent 1px 2px)"></div>
<svg class="a" style="left:240px;top:190px" width="14" height="23" viewBox="0 0 14 23"><path d="M7 1C10 1 11.5 3.5 11.5 6.5V13H10V10H4V13H2.5V6.5C2.5 3.5 4 1 7 1Z" fill="#d8d8d8" stroke="#2a2222" stroke-width="0.7"/><rect x="4.2" y="5.5" width="5.6" height="4.5" fill="#f0d0b0"/><rect x="4" y="4.5" width="6" height="1.6" fill="#d8d8d8"/><rect x="5" y="7" width="1" height="1" fill="#305060"/><rect x="8" y="7" width="1" height="1" fill="#305060"/><path d="M3 10.5H11L11.5 18H2.5Z" fill="#a8c0a0" stroke="#2a2222" stroke-width="0.6"/><rect x="5" y="10.5" width="4" height="1.5" fill="#e8e8e0"/><rect x="3.5" y="14.5" width="7" height="1.2" fill="#e8e8e0"/><rect x="1" y="12" width="1.8" height="4.5" fill="#f0d0b0" stroke="#2a2222" stroke-width="0.4"/><rect x="11.2" y="12" width="1.8" height="4.5" fill="#f0d0b0" stroke="#2a2222" stroke-width="0.4"/><rect x="4" y="18" width="2.2" height="4" fill="#3a3030"/><rect x="7.8" y="18" width="2.2" height="4" fill="#3a3030"/></svg>
<div class="t" style="left:260px;top:194px;letter-spacing:0.3px;color:#000">Elf B</div>
<div class="a" style="left:225px;top:225px;width:10px;height:1px;background:repeating-linear-gradient(to right,#a8a8a8 0 1px,transparent 1px 2px)"></div>
<svg class="a" style="left:240px;top:214px" width="14" height="23" viewBox="0 0 14 23"><path d="M7 1C10 1 11.5 3.5 11.5 6.5V13H10V10H4V13H2.5V6.5C2.5 3.5 4 1 7 1Z" fill="#6a4a30" stroke="#2a2222" stroke-width="0.7"/><rect x="4.2" y="5.5" width="5.6" height="4.5" fill="#f0d0b0"/><rect x="4" y="4.5" width="6" height="1.6" fill="#6a4a30"/><rect x="5" y="7" width="1" height="1" fill="#305060"/><rect x="8" y="7" width="1" height="1" fill="#305060"/><path d="M3 10.5H11L11.5 18H2.5Z" fill="#8a6a3a" stroke="#2a2222" stroke-width="0.6"/><rect x="5" y="10.5" width="4" height="1.5" fill="#c09050"/><rect x="3.5" y="14.5" width="7" height="1.2" fill="#c09050"/><rect x="1" y="12" width="1.8" height="4.5" fill="#f0d0b0" stroke="#2a2222" stroke-width="0.4"/><rect x="11.2" y="12" width="1.8" height="4.5" fill="#f0d0b0" stroke="#2a2222" stroke-width="0.4"/><rect x="4" y="18" width="2.2" height="4" fill="#3a3030"/><rect x="7.8" y="18" width="2.2" height="4" fill="#3a3030"/></svg>
<div class="t" style="left:260px;top:218px;letter-spacing:0.3px;color:#000">Warrior A</div>
<div class="a" style="left:225px;top:249px;width:10px;height:1px;background:repeating-linear-gradient(to right,#a8a8a8 0 1px,transparent 1px 2px)"></div>
<svg class="a" style="left:240px;top:238px" width="14" height="23" viewBox="0 0 14 23"><path d="M7 1C10 1 11.5 3.5 11.5 6.5V13H10V10H4V13H2.5V6.5C2.5 3.5 4 1 7 1Z" fill="#e0e0e8" stroke="#2a2222" stroke-width="0.7"/><rect x="4.2" y="5.5" width="5.6" height="4.5" fill="#f0d0b0"/><rect x="4" y="4.5" width="6" height="1.6" fill="#e0e0e8"/><rect x="5" y="7" width="1" height="1" fill="#305060"/><rect x="8" y="7" width="1" height="1" fill="#305060"/><path d="M3 10.5H11L11.5 18H2.5Z" fill="#5a4a80" stroke="#2a2222" stroke-width="0.6"/><rect x="5" y="10.5" width="4" height="1.5" fill="#c8c8d8"/><rect x="3.5" y="14.5" width="7" height="1.2" fill="#c8c8d8"/><rect x="1" y="12" width="1.8" height="4.5" fill="#f0d0b0" stroke="#2a2222" stroke-width="0.4"/><rect x="11.2" y="12" width="1.8" height="4.5" fill="#f0d0b0" stroke="#2a2222" stroke-width="0.4"/><rect x="4" y="18" width="2.2" height="4" fill="#3a3030"/><rect x="7.8" y="18" width="2.2" height="4" fill="#3a3030"/></svg>
<div class="t" style="left:260px;top:242px;letter-spacing:0.3px;color:#000">Warrior B</div>
<div class="a" style="left:225px;top:273px;width:10px;height:1px;background:repeating-linear-gradient(to right,#a8a8a8 0 1px,transparent 1px 2px)"></div>
<svg class="a" style="left:240px;top:262px" width="14" height="23" viewBox="0 0 14 23"><path d="M7 1C10 1 11.5 3.5 11.5 6.5V13H10V10H4V13H2.5V6.5C2.5 3.5 4 1 7 1Z" fill="#b0a8d8" stroke="#2a2222" stroke-width="0.7"/><rect x="4.2" y="5.5" width="5.6" height="4.5" fill="#f0d0b0"/><rect x="4" y="4.5" width="6" height="1.6" fill="#b0a8d8"/><rect x="5" y="7" width="1" height="1" fill="#305060"/><rect x="8" y="7" width="1" height="1" fill="#305060"/><path d="M3 10.5H11L11.5 18H2.5Z" fill="#283048" stroke="#2a2222" stroke-width="0.6"/><rect x="5" y="10.5" width="4" height="1.5" fill="#d0a040"/><rect x="3.5" y="14.5" width="7" height="1.2" fill="#d0a040"/><rect x="1" y="12" width="1.8" height="4.5" fill="#f0d0b0" stroke="#2a2222" stroke-width="0.4"/><rect x="11.2" y="12" width="1.8" height="4.5" fill="#f0d0b0" stroke="#2a2222" stroke-width="0.4"/><rect x="4" y="18" width="2.2" height="4" fill="#3a3030"/><rect x="7.8" y="18" width="2.2" height="4" fill="#3a3030"/></svg>
<div class="t" style="left:260px;top:266px;letter-spacing:0.3px;color:#000">Priest A</div>
<div class="a" style="left:225px;top:297px;width:10px;height:1px;background:repeating-linear-gradient(to right,#a8a8a8 0 1px,transparent 1px 2px)"></div>
<svg class="a" style="left:240px;top:286px" width="14" height="23" viewBox="0 0 14 23"><path d="M7 1C10 1 11.5 3.5 11.5 6.5V13H10V10H4V13H2.5V6.5C2.5 3.5 4 1 7 1Z" fill="#98d0f0" stroke="#2a2222" stroke-width="0.7"/><rect x="4.2" y="5.5" width="5.6" height="4.5" fill="#f0d0b0"/><rect x="4" y="4.5" width="6" height="1.6" fill="#98d0f0"/><rect x="5" y="7" width="1" height="1" fill="#305060"/><rect x="8" y="7" width="1" height="1" fill="#305060"/><path d="M3 10.5H11L11.5 18H2.5Z" fill="#f0e0a0" stroke="#2a2222" stroke-width="0.6"/><rect x="5" y="10.5" width="4" height="1.5" fill="#3070b0"/><rect x="3.5" y="14.5" width="7" height="1.2" fill="#3070b0"/><rect x="1" y="12" width="1.8" height="4.5" fill="#f0d0b0" stroke="#2a2222" stroke-width="0.4"/><rect x="11.2" y="12" width="1.8" height="4.5" fill="#f0d0b0" stroke="#2a2222" stroke-width="0.4"/><rect x="4" y="18" width="2.2" height="4" fill="#3a3030"/><rect x="7.8" y="18" width="2.2" height="4" fill="#3a3030"/></svg>
<div class="t" style="left:260px;top:290px;letter-spacing:0.3px;color:#000">Priest B</div>
<div class="a" style="left:225px;top:321px;width:10px;height:1px;background:repeating-linear-gradient(to right,#a8a8a8 0 1px,transparent 1px 2px)"></div>
<svg class="a" style="left:240px;top:310px" width="14" height="23" viewBox="0 0 14 23"><path d="M7 1C10 1 11.5 3.5 11.5 6.5V13H10V10H4V13H2.5V6.5C2.5 3.5 4 1 7 1Z" fill="#f0a0b0" stroke="#2a2222" stroke-width="0.7"/><rect x="4.2" y="5.5" width="5.6" height="4.5" fill="#f0d0b0"/><rect x="4" y="4.5" width="6" height="1.6" fill="#f0a0b0"/><rect x="5" y="7" width="1" height="1" fill="#305060"/><rect x="8" y="7" width="1" height="1" fill="#305060"/><path d="M3 10.5H11L11.5 18H2.5Z" fill="#f0e8f0" stroke="#2a2222" stroke-width="0.6"/><rect x="5" y="10.5" width="4" height="1.5" fill="#d87090"/><rect x="3.5" y="14.5" width="7" height="1.2" fill="#d87090"/><rect x="1" y="12" width="1.8" height="4.5" fill="#f0d0b0" stroke="#2a2222" stroke-width="0.4"/><rect x="11.2" y="12" width="1.8" height="4.5" fill="#f0d0b0" stroke="#2a2222" stroke-width="0.4"/><rect x="4" y="18" width="2.2" height="4" fill="#3a3030"/><rect x="7.8" y="18" width="2.2" height="4" fill="#3a3030"/></svg>
<div class="t" style="left:260px;top:314px;letter-spacing:0.3px;color:#000">White Mage</div>
<div class="a" style="left:225px;top:345px;width:10px;height:1px;background:repeating-linear-gradient(to right,#a8a8a8 0 1px,transparent 1px 2px)"></div>
<svg class="a" style="left:240px;top:334px" width="14" height="23" viewBox="0 0 14 23"><path d="M7 1C10 1 11.5 3.5 11.5 6.5V13H10V10H4V13H2.5V6.5C2.5 3.5 4 1 7 1Z" fill="#d03020" stroke="#2a2222" stroke-width="0.7"/><rect x="4.2" y="5.5" width="5.6" height="4.5" fill="#f0d0b0"/><rect x="4" y="4.5" width="6" height="1.6" fill="#d03020"/><rect x="5" y="7" width="1" height="1" fill="#305060"/><rect x="8" y="7" width="1" height="1" fill="#305060"/><path d="M3 10.5H11L11.5 18H2.5Z" fill="#303030" stroke="#2a2222" stroke-width="0.6"/><rect x="5" y="10.5" width="4" height="1.5" fill="#505050"/><rect x="3.5" y="14.5" width="7" height="1.2" fill="#505050"/><rect x="1" y="12" width="1.8" height="4.5" fill="#f0d0b0" stroke="#2a2222" stroke-width="0.4"/><rect x="11.2" y="12" width="1.8" height="4.5" fill="#f0d0b0" stroke="#2a2222" stroke-width="0.4"/><rect x="4" y="18" width="2.2" height="4" fill="#3a3030"/><rect x="7.8" y="18" width="2.2" height="4" fill="#3a3030"/></svg>
<div class="t" style="left:260px;top:338px;letter-spacing:0.3px;color:#000">Black Mage</div>
<div class="a" style="left:225px;top:369px;width:10px;height:1px;background:repeating-linear-gradient(to right,#a8a8a8 0 1px,transparent 1px 2px)"></div>
<svg class="a" style="left:240px;top:358px" width="14" height="23" viewBox="0 0 14 23"><path d="M7 0.5L9.5 4L13 7.5H1L4.5 4Z" fill="#c8c4c0" stroke="#2a2222" stroke-width="0.7"/><rect x="4" y="7" width="6" height="3" fill="#f0d0b0"/><path d="M4 9H10L9 13H5Z" fill="#f0f0f0"/><path d="M3 10H11L12 20H2Z" fill="#d8d0c8" stroke="#2a2222" stroke-width="0.6"/><rect x="6" y="12" width="2" height="7" fill="#8a7a6a"/><rect x="4" y="20" width="2" height="2.5" fill="#5a4a3a"/><rect x="8" y="20" width="2" height="2.5" fill="#5a4a3a"/></svg>
<div class="t" style="left:260px;top:362px;letter-spacing:0.3px;color:#000">Grand Mage</div>
<svg class="a" style="left:211px;top:385px" width="20" height="19" viewBox="0 0 20 19"><path d="M1.2 17.2V2.1L2.9 0.9H8.6V4.3L17 3V13.9Z" fill="none" stroke="#000" stroke-width="1.5" stroke-linejoin="round"/></svg>
<div class="t" style="left:233px;top:386px;letter-spacing:0.3px">Support Casts</div>
<svg class="a" style="left:211px;top:409px" width="20" height="19" viewBox="0 0 20 19"><path d="M1.2 17.2V2.1L2.9 0.9H8.6V4.3L17 3V13.9Z" fill="none" stroke="#000" stroke-width="1.5" stroke-linejoin="round"/></svg>
<div class="t" style="left:233px;top:410px;letter-spacing:0.3px">Monster Casts</div>
<svg class="a" style="left:184px;top:433px" width="20" height="19" viewBox="0 0 20 19"><path d="M1.2 17.2V2.1L2.9 0.9H8.6V4.3L17 3V13.9Z" fill="none" stroke="#f5aacb" stroke-width="1.3" stroke-linejoin="round"/></svg>
<div class="t" style="left:206px;top:434px;letter-spacing:0.3px;color:#e4007c">reserved</div>
<div class="hdr" style="left:173px;top:580px;width:303px;height:22px;letter-spacing:0.45px">#Management Tags + Notes</div>
<div class="a" style="left:173px;top:602px;width:303px;height:114px;background:#fff;border:1px solid #7f8893;border-top:none"></div>
<div class="hdr" style="left:480px;top:34px;width:615px">Slice Animation Preview</div>
<div class="a" style="left:480px;top:55px;width:615px;height:337px;background:#4d4d4d"></div>
<svg class="a" style="left:480px;top:55px" width="615" height="337" viewBox="0 0 615 337"><g fill="none" stroke-width="1" shape-rendering="crispEdges"><path d="M201.5 68.1L205.9 67.6M205.9 67.6L210.1 67.2M210.1 67.2L214.2 66.7M214.2 66.7L218.2 66.3M218.2 66.3L222.0 65.9M222.0 65.9L225.8 65.5M225.8 65.5L229.5 65.2M229.5 65.2L233.0 64.8M213.9 68.2L218.1 67.7M218.1 67.7L222.2 67.3M222.2 67.3L226.2 66.8M226.2 66.8L230.1 66.4M230.1 66.4L233.8 66.0M233.8 66.0L237.5 65.6M237.5 65.6L241.0 65.2M227.1 68.2L231.1 67.7M231.1 67.7L234.9 67.3M234.9 67.3L238.7 66.9M238.7 66.9L242.3 66.5M242.3 66.5L245.9 66.1M245.9 66.1L249.3 65.7M243.5 67.8L247.3 67.4M247.3 67.4L250.9 67.0M250.9 67.0L254.4 66.5M254.4 66.5L257.8 66.1M256.1 67.9L259.7 67.5M259.7 67.5L263.2 67.0M263.2 67.0L266.6 66.6M269.1 68.0L272.5 67.5M272.5 67.5L275.7 67.1M281.9 68.1L285.2 67.6M209.5 67.2L213.6 67.5M213.6 67.5L217.8 67.7M217.8 67.7L222.1 68.0M217.8 66.4L221.9 66.6M221.9 66.6L226.0 66.9M226.0 66.9L230.2 67.1M230.2 67.1L234.5 67.4M234.5 67.4L238.9 67.6M238.9 67.6L243.3 67.9M225.6 65.6L229.7 65.8M229.7 65.8L233.7 66.0M233.7 66.0L237.9 66.3M237.9 66.3L242.1 66.5M242.1 66.5L246.4 66.7M246.4 66.7L250.8 67.0M250.8 67.0L255.2 67.2M255.2 67.2L259.7 67.5M259.7 67.5L264.3 67.7M264.3 67.7L269.0 68.0M233.0 64.8L237.0 65.0M237.0 65.0L241.0 65.2M241.0 65.2L245.1 65.5M245.1 65.5L249.3 65.7M249.3 65.7L253.5 65.9M253.5 65.9L257.8 66.1M257.8 66.1L262.2 66.4M262.2 66.4L266.6 66.6M266.6 66.6L271.2 66.9M271.2 66.9L275.7 67.1M275.7 67.1L280.4 67.4M280.4 67.4L285.2 67.6M285.2 67.6L290.0 67.9" stroke="rgb(90, 90, 90)" /><path d="M167.2 71.6L172.6 71.0M172.6 71.0L177.8 70.5M177.8 70.5L182.8 70.0M182.8 70.0L187.7 69.5M187.7 69.5L192.4 69.0M192.4 69.0L197.0 68.5M197.0 68.5L201.5 68.1M180.4 71.8L185.7 71.2M185.7 71.2L190.7 70.7M190.7 70.7L195.7 70.1M195.7 70.1L200.4 69.6M200.4 69.6L205.1 69.1M205.1 69.1L209.5 68.6M209.5 68.6L213.9 68.2M195.7 71.8L200.6 71.2M200.6 71.2L205.4 70.7M205.4 70.7L210.0 70.1M210.0 70.1L214.5 69.6M214.5 69.6L218.8 69.1M218.8 69.1L223.0 68.7M223.0 68.7L227.1 68.2M209.2 71.9L214.0 71.4M214.0 71.4L218.6 70.8M218.6 70.8L223.1 70.3M223.1 70.3L227.4 69.8M227.4 69.8L231.6 69.3M231.6 69.3L235.7 68.8M235.7 68.8L239.7 68.3M239.7 68.3L243.5 67.8M222.9 72.1L227.6 71.5M227.6 71.5L232.1 71.0M232.1 71.0L236.4 70.4M236.4 70.4L240.6 69.9M240.6 69.9L244.7 69.4M244.7 69.4L248.6 68.9M248.6 68.9L252.4 68.4M252.4 68.4L256.1 67.9M238.2 72.1L242.5 71.5M242.5 71.5L246.7 71.0M246.7 71.0L250.7 70.4M250.7 70.4L254.6 69.9M254.6 69.9L258.4 69.4M258.4 69.4L262.1 68.9M262.1 68.9L265.7 68.4M265.7 68.4L269.1 68.0M256.4 71.7L260.4 71.1M260.4 71.1L264.3 70.6M264.3 70.6L268.0 70.0M268.0 70.0L271.7 69.5M271.7 69.5L275.2 69.0M275.2 69.0L278.6 68.5M278.6 68.5L281.9 68.1M271.2 71.7L274.9 71.1M274.9 71.1L278.5 70.6M278.5 70.6L282.0 70.1M282.0 70.1L285.4 69.6M285.4 69.6L288.6 69.1M288.6 69.1L291.8 68.6M291.8 68.6L294.9 68.1M285.4 71.8L288.9 71.3M288.9 71.3L292.3 70.7M292.3 70.7L295.6 70.2M295.6 70.2L298.9 69.7M298.9 69.7L302.0 69.2M302.0 69.2L305.0 68.7M299.7 72.0L303.1 71.4M303.1 71.4L306.3 70.8M306.3 70.8L309.4 70.3M309.4 70.3L312.5 69.8M312.5 69.8L315.4 69.2M314.6 72.0L317.7 71.4M317.7 71.4L320.6 70.9M320.6 70.9L323.5 70.4M323.5 70.4L326.3 69.8M332.0 71.5L334.8 71.0M334.8 71.0L337.5 70.4M346.7 71.6L349.2 71.1M170.9 71.2L175.2 71.5M175.2 71.5L179.6 71.9M181.5 70.1L185.7 70.4M185.7 70.4L190.1 70.7M190.1 70.7L194.5 71.1M194.5 71.1L199.0 71.4M199.0 71.4L203.6 71.7M191.4 69.1L195.6 69.4M195.6 69.4L199.9 69.7M199.9 69.7L204.3 70.0M204.3 70.0L208.7 70.3M208.7 70.3L213.3 70.6M213.3 70.6L217.9 70.9M217.9 70.9L222.6 71.2M222.6 71.2L227.4 71.5M227.4 71.5L232.3 71.9M200.7 68.1L204.9 68.4M204.9 68.4L209.1 68.7M209.1 68.7L213.5 69.0M213.5 69.0L217.9 69.2M217.9 69.2L222.3 69.5M222.3 69.5L226.9 69.8M226.9 69.8L231.5 70.1M231.5 70.1L236.3 70.4M236.3 70.4L241.1 70.7M241.1 70.7L246.0 71.1M246.0 71.1L251.0 71.4M251.0 71.4L256.1 71.7M222.1 68.0L226.4 68.3M226.4 68.3L230.9 68.5M230.9 68.5L235.3 68.8M235.3 68.8L239.9 69.1M239.9 69.1L244.6 69.4M244.6 69.4L249.3 69.7M249.3 69.7L254.1 70.0M254.1 70.0L259.1 70.3M259.1 70.3L264.1 70.6M264.1 70.6L269.2 70.9M269.2 70.9L274.4 71.2M274.4 71.2L279.7 71.5M279.7 71.5L285.1 71.9M243.3 67.9L247.8 68.1M247.8 68.1L252.4 68.4M252.4 68.4L257.0 68.7M257.0 68.7L261.8 69.0M261.8 69.0L266.6 69.2M266.6 69.2L271.5 69.5M271.5 69.5L276.6 69.8M276.6 69.8L281.7 70.1M281.7 70.1L286.9 70.4M286.9 70.4L292.1 70.7M292.1 70.7L297.5 71.1M297.5 71.1L303.0 71.4M303.0 71.4L308.7 71.7M269.0 68.0L273.7 68.3M273.7 68.3L278.6 68.5M278.6 68.5L283.5 68.8M283.5 68.8L288.5 69.1M288.5 69.1L293.6 69.4M293.6 69.4L298.8 69.7M298.8 69.7L304.1 70.0M304.1 70.0L309.4 70.3M309.4 70.3L314.9 70.6M314.9 70.6L320.5 70.9M320.5 70.9L326.2 71.2M326.2 71.2L332.0 71.6M332.0 71.6L337.9 71.9M290.0 67.9L294.9 68.1M294.9 68.1L299.9 68.4M299.9 68.4L305.0 68.7M305.0 68.7L310.2 69.0M310.2 69.0L315.4 69.2M315.4 69.2L320.8 69.5M320.8 69.5L326.3 69.8M326.3 69.8L331.8 70.1M331.8 70.1L337.5 70.4M337.5 70.4L343.3 70.8M343.3 70.8L349.2 71.1M349.2 71.1L355.2 71.4M355.2 71.4L361.3 71.7" stroke="rgb(94, 94, 94)" /><path d="M124.0 76.1L130.8 75.3M130.8 75.3L137.4 74.7M137.4 74.7L143.8 74.0M143.8 74.0L149.9 73.4M149.9 73.4L155.9 72.8M155.9 72.8L161.6 72.2M161.6 72.2L167.2 71.6M144.8 75.6L151.3 74.9M151.3 74.9L157.5 74.2M157.5 74.2L163.6 73.6M163.6 73.6L169.4 73.0M169.4 73.0L175.0 72.4M175.0 72.4L180.4 71.8M162.4 75.5L168.4 74.8M168.4 74.8L174.3 74.2M174.3 74.2L179.9 73.5M179.9 73.5L185.3 72.9M185.3 72.9L190.6 72.3M190.6 72.3L195.7 71.8M176.8 75.8L182.7 75.1M182.7 75.1L188.4 74.4M188.4 74.4L193.9 73.8M193.9 73.8L199.2 73.1M199.2 73.1L204.3 72.5M204.3 72.5L209.2 71.9M191.5 76.1L197.2 75.3M197.2 75.3L202.7 74.6M202.7 74.6L208.1 74.0M208.1 74.0L213.2 73.3M213.2 73.3L218.2 72.7M218.2 72.7L222.9 72.1M209.0 76.0L214.3 75.3M214.3 75.3L219.4 74.6M219.4 74.6L224.4 73.9M224.4 73.9L229.1 73.3M229.1 73.3L233.7 72.7M233.7 72.7L238.2 72.1M229.2 75.5L234.1 74.8M234.1 74.8L238.9 74.1M238.9 74.1L243.5 73.5M243.5 73.5L247.9 72.9M247.9 72.9L252.2 72.3M252.2 72.3L256.4 71.7M246.2 75.5L250.7 74.8M250.7 74.8L255.1 74.1M255.1 74.1L259.4 73.5M259.4 73.5L263.5 72.9M263.5 72.9L267.4 72.3M267.4 72.3L271.2 71.7M261.4 75.7L265.8 75.0M265.8 75.0L270.0 74.3M270.0 74.3L274.0 73.7M274.0 73.7L277.9 73.0M277.9 73.0L281.7 72.4M281.7 72.4L285.4 71.8M276.9 75.9L281.1 75.2M281.1 75.2L285.1 74.5M285.1 74.5L288.9 73.8M288.9 73.8L292.6 73.2M292.6 73.2L296.2 72.6M296.2 72.6L299.7 72.0M293.9 75.9L297.7 75.2M297.7 75.2L301.3 74.5M301.3 74.5L304.8 73.8M304.8 73.8L308.2 73.2M308.2 73.2L311.4 72.6M311.4 72.6L314.6 72.0M313.3 75.4L316.7 74.7M316.7 74.7L320.0 74.0M320.0 74.0L323.1 73.4M323.1 73.4L326.2 72.7M326.2 72.7L329.2 72.1M329.2 72.1L332.0 71.5M329.8 75.4L332.9 74.7M332.9 74.7L335.8 74.0M335.8 74.0L338.7 73.4M338.7 73.4L341.4 72.8M341.4 72.8L344.1 72.2M344.1 72.2L346.7 71.6M345.7 75.6L348.6 74.9M348.6 74.9L351.3 74.2M351.3 74.2L353.9 73.5M353.9 73.5L356.5 72.9M356.5 72.9L358.9 72.3M358.9 72.3L361.3 71.7M362.3 75.6L364.8 74.9M364.8 74.9L367.2 74.3M367.2 74.3L369.5 73.6M369.5 73.6L371.7 73.0M371.7 73.0L373.9 72.4M378.5 75.8L380.7 75.1M380.7 75.1L382.9 74.4M382.9 74.4L385.0 73.7M385.0 73.7L387.0 73.1M394.9 75.9L396.9 75.2M396.9 75.2L398.8 74.5M398.8 74.5L400.6 73.9M411.6 76.0L413.2 75.3M413.2 75.3L414.8 74.6M134.5 75.0L138.9 75.4M138.9 75.4L143.4 75.8M147.5 73.6L151.9 74.0M151.9 74.0L156.3 74.4M156.3 74.4L160.9 74.8M160.9 74.8L165.5 75.2M165.5 75.2L170.3 75.6M159.6 72.4L163.9 72.7M163.9 72.7L168.4 73.1M168.4 73.1L172.9 73.4M172.9 73.4L177.5 73.8M177.5 73.8L182.2 74.2M182.2 74.2L187.0 74.6M187.0 74.6L191.9 75.0M191.9 75.0L196.9 75.4M196.9 75.4L202.0 75.8M179.6 71.9L184.1 72.2M184.1 72.2L188.6 72.6M188.6 72.6L193.3 72.9M193.3 72.9L198.0 73.3M198.0 73.3L202.9 73.6M202.9 73.6L207.8 74.0M207.8 74.0L212.8 74.4M212.8 74.4L218.0 74.8M218.0 74.8L223.2 75.2M223.2 75.2L228.6 75.6M203.6 71.7L208.3 72.0M208.3 72.0L213.1 72.4M213.1 72.4L217.9 72.7M217.9 72.7L222.9 73.1M222.9 73.1L228.0 73.5M228.0 73.5L233.2 73.8M233.2 73.8L238.4 74.2M238.4 74.2L243.8 74.6M243.8 74.6L249.3 75.0M249.3 75.0L255.0 75.4M255.0 75.4L260.7 75.8M232.3 71.9L237.3 72.2M237.3 72.2L242.4 72.6M242.4 72.6L247.6 72.9M247.6 72.9L252.9 73.3M252.9 73.3L258.3 73.6M258.3 73.6L263.8 74.0M263.8 74.0L269.4 74.4M269.4 74.4L275.2 74.8M275.2 74.8L281.0 75.2M281.0 75.2L287.0 75.6M256.1 71.7L261.3 72.0M261.3 72.0L266.6 72.4M266.6 72.4L272.0 72.7M272.0 72.7L277.5 73.1M277.5 73.1L283.2 73.5M283.2 73.5L288.9 73.8M288.9 73.8L294.8 74.2M294.8 74.2L300.7 74.6M300.7 74.6L306.9 75.0M306.9 75.0L313.1 75.4M313.1 75.4L319.5 75.8M285.1 71.9L290.6 72.2M290.6 72.2L296.2 72.6M296.2 72.6L301.9 72.9M301.9 72.9L307.8 73.3M307.8 73.3L313.8 73.6M313.8 73.6L319.9 74.0M319.9 74.0L326.1 74.4M326.1 74.4L332.4 74.8M332.4 74.8L338.9 75.2M338.9 75.2L345.5 75.6M308.7 71.7L314.4 72.1M314.4 72.1L320.2 72.4M320.2 72.4L326.1 72.7M326.1 72.7L332.2 73.1M332.2 73.1L338.4 73.5M338.4 73.5L344.7 73.8M344.7 73.8L351.2 74.2M351.2 74.2L357.7 74.6M357.7 74.6L364.5 75.0M364.5 75.0L371.3 75.4M371.3 75.4L378.3 75.8M337.9 71.9L344.0 72.2M344.0 72.2L350.1 72.6M350.1 72.6L356.4 72.9M356.4 72.9L362.8 73.3M362.8 73.3L369.3 73.7M369.3 73.7L376.0 74.0M376.0 74.0L382.8 74.4M382.8 74.4L389.8 74.8M389.8 74.8L396.9 75.2M396.9 75.2L404.1 75.6M361.3 71.7L367.5 72.1M367.5 72.1L373.9 72.4M373.9 72.4L380.4 72.8M380.4 72.8L387.0 73.1M387.0 73.1L393.7 73.5M393.7 73.5L400.6 73.9M400.6 73.9L407.6 74.2M407.6 74.2L414.8 74.6M414.8 74.6L422.2 75.0M422.2 75.0L429.6 75.4M429.6 75.4L437.3 75.8" stroke="rgb(99, 99, 99)" /><path d="M85.6 80.0L93.9 79.2M93.9 79.2L101.8 78.3M101.8 78.3L109.5 77.5M109.5 77.5L116.9 76.8M116.9 76.8L124.0 76.1M108.6 79.5L116.4 78.7M116.4 78.7L123.9 77.9M123.9 77.9L131.2 77.1M131.2 77.1L138.1 76.3M138.1 76.3L144.8 75.6M128.6 79.4L135.9 78.5M135.9 78.5L142.9 77.7M142.9 77.7L149.7 77.0M149.7 77.0L156.1 76.2M156.1 76.2L162.4 75.5M143.8 79.7L150.9 78.9M150.9 78.9L157.8 78.1M157.8 78.1L164.4 77.3M164.4 77.3L170.7 76.5M170.7 76.5L176.8 75.8M159.3 80.1L166.3 79.2M166.3 79.2L173.0 78.4M173.0 78.4L179.4 77.6M179.4 77.6L185.6 76.8M185.6 76.8L191.5 76.1M179.3 79.9L185.7 79.1M185.7 79.1L191.9 78.2M191.9 78.2L197.8 77.5M197.8 77.5L203.5 76.7M203.5 76.7L209.0 76.0M201.5 79.4L207.5 78.6M207.5 78.6L213.2 77.8M213.2 77.8L218.8 77.0M218.8 77.0L224.1 76.2M224.1 76.2L229.2 75.5M220.7 79.3L226.2 78.5M226.2 78.5L231.5 77.7M231.5 77.7L236.6 76.9M236.6 76.9L241.5 76.2M241.5 76.2L246.2 75.5M237.0 79.6L242.3 78.8M242.3 78.8L247.3 77.9M247.3 77.9L252.2 77.2M252.2 77.2L256.9 76.4M256.9 76.4L261.4 75.7M253.6 79.9L258.6 79.1M258.6 79.1L263.5 78.2M263.5 78.2L268.1 77.4M268.1 77.4L272.6 76.6M272.6 76.6L276.9 75.9M272.8 79.8L277.3 79.0M277.3 79.0L281.7 78.2M281.7 78.2L285.9 77.4M285.9 77.4L290.0 76.6M290.0 76.6L293.9 75.9M294.1 79.3L298.2 78.4M298.2 78.4L302.2 77.6M302.2 77.6L306.0 76.8M306.0 76.8L309.7 76.1M309.7 76.1L313.3 75.4M308.8 80.1L312.7 79.2M312.7 79.2L316.4 78.4M316.4 78.4L319.9 77.6M319.9 77.6L323.4 76.8M323.4 76.8L326.6 76.1M326.6 76.1L329.8 75.4M329.9 79.5L333.3 78.6M333.3 78.6L336.6 77.8M336.6 77.8L339.7 77.0M339.7 77.0L342.8 76.3M342.8 76.3L345.7 75.6M348.4 79.4L351.4 78.6M351.4 78.6L354.3 77.8M354.3 77.8L357.0 77.1M357.0 77.1L359.7 76.3M359.7 76.3L362.3 75.6M366.0 79.7L368.7 78.9M368.7 78.9L371.3 78.0M371.3 78.0L373.8 77.3M373.8 77.3L376.2 76.5M376.2 76.5L378.5 75.8M383.8 80.0L386.2 79.1M386.2 79.1L388.5 78.2M388.5 78.2L390.7 77.4M390.7 77.4L392.9 76.7M392.9 76.7L394.9 75.9M402.5 80.0L404.4 79.1M404.4 79.1L406.3 78.3M406.3 78.3L408.2 77.5M408.2 77.5L409.9 76.7M409.9 76.7L411.6 76.0M422.3 79.3L423.9 78.5M423.9 78.5L425.4 77.7M425.4 77.7L426.9 76.9M426.9 76.9L428.3 76.1M428.3 76.1L429.6 75.4M440.6 79.4L441.8 78.5M441.8 78.5L442.9 77.8M442.9 77.8L444.1 77.0M444.1 77.0L445.1 76.3M458.8 79.6L459.7 78.7M459.7 78.7L460.5 77.9M460.5 77.9L461.3 77.1M477.3 79.7L477.7 78.8M477.7 78.8L478.2 78.0M495.8 79.8L495.9 79.0M105.5 78.0L109.9 78.4M109.9 78.4L114.4 78.9M114.4 78.9L119.0 79.4M119.0 79.4L123.7 79.9M120.5 76.4L124.9 76.8M124.9 76.8L129.4 77.3M129.4 77.3L134.1 77.7M134.1 77.7L138.8 78.2M138.8 78.2L143.6 78.7M143.6 78.7L148.5 79.2M148.5 79.2L153.6 79.7M143.4 75.8L148.0 76.2M148.0 76.2L152.7 76.6M152.7 76.6L157.4 77.1M157.4 77.1L162.3 77.5M162.3 77.5L167.3 78.0M167.3 78.0L172.5 78.4M172.5 78.4L177.7 78.9M177.7 78.9L183.1 79.4M170.3 75.6L175.1 76.0M175.1 76.0L180.1 76.4M180.1 76.4L185.2 76.9M185.2 76.9L190.3 77.3M190.3 77.3L195.6 77.7M195.6 77.7L201.1 78.2M201.1 78.2L206.6 78.7M206.6 78.7L212.3 79.2M212.3 79.2L218.1 79.7M202.0 75.8L207.2 76.2M207.2 76.2L212.6 76.6M212.6 76.6L218.0 77.1M218.0 77.1L223.6 77.5M223.6 77.5L229.3 78.0M229.3 78.0L235.2 78.5M235.2 78.5L241.2 78.9M241.2 78.9L247.3 79.4M228.6 75.6L234.1 76.0M234.1 76.0L239.7 76.4M239.7 76.4L245.4 76.9M245.4 76.9L251.3 77.3M251.3 77.3L257.3 77.8M257.3 77.8L263.4 78.2M263.4 78.2L269.7 78.7M269.7 78.7L276.1 79.2M276.1 79.2L282.7 79.7M260.7 75.8L266.6 76.2M266.6 76.2L272.6 76.7M272.6 76.7L278.7 77.1M278.7 77.1L285.0 77.5M285.0 77.5L291.4 78.0M291.4 78.0L298.0 78.5M298.0 78.5L304.7 79.0M304.7 79.0L311.6 79.4M287.0 75.6L293.2 76.0M293.2 76.0L299.4 76.4M299.4 76.4L305.8 76.9M305.8 76.9L312.4 77.3M312.4 77.3L319.1 77.8M319.1 77.8L325.9 78.2M325.9 78.2L332.9 78.7M332.9 78.7L340.1 79.2M340.1 79.2L347.4 79.7M319.5 75.8L326.0 76.2M326.0 76.2L332.7 76.7M332.7 76.7L339.5 77.1M339.5 77.1L346.4 77.6M346.4 77.6L353.6 78.0M353.6 78.0L360.9 78.5M360.9 78.5L368.3 79.0M368.3 79.0L376.0 79.5M345.5 75.6L352.3 76.0M352.3 76.0L359.2 76.5M359.2 76.5L366.3 76.9M366.3 76.9L373.5 77.3M373.5 77.3L380.9 77.8M380.9 77.8L388.5 78.3M388.5 78.3L396.2 78.7M396.2 78.7L404.2 79.2M404.2 79.2L412.3 79.7M378.3 75.8L385.5 76.2M385.5 76.2L392.8 76.7M392.8 76.7L400.3 77.1M400.3 77.1L408.0 77.6M408.0 77.6L415.8 78.0M415.8 78.0L423.9 78.5M423.9 78.5L432.1 79.0M432.1 79.0L440.5 79.5M404.1 75.6L411.5 76.0M411.5 76.0L419.1 76.5M419.1 76.5L426.9 76.9M426.9 76.9L434.8 77.3M434.8 77.3L442.9 77.8M442.9 77.8L451.2 78.3M451.2 78.3L459.6 78.7M459.6 78.7L468.3 79.2M468.3 79.2L477.2 79.7M437.3 75.8L445.1 76.3M445.1 76.3L453.1 76.7M453.1 76.7L461.3 77.1M461.3 77.1L469.6 77.6M469.6 77.6L478.2 78.0M478.2 78.0L486.9 78.5M486.9 78.5L495.9 79.0M495.9 79.0L505.1 79.5" stroke="rgb(103, 103, 103)" /><path d="M48.7 83.8L58.5 82.8M58.5 82.8L67.9 81.8M67.9 81.8L76.9 80.9M76.9 80.9L85.6 80.0M73.8 83.3L83.0 82.3M83.0 82.3L91.9 81.3M91.9 81.3L100.4 80.4M100.4 80.4L108.6 79.5M87.3 84.0L96.3 83.0M96.3 83.0L104.9 82.0M104.9 82.0L113.1 81.1M113.1 81.1L121.0 80.2M121.0 80.2L128.6 79.4M112.1 83.5L120.6 82.5M120.6 82.5L128.6 81.5M128.6 81.5L136.4 80.6M136.4 80.6L143.8 79.7M128.3 84.0L136.6 83.0M136.6 83.0L144.5 82.0M144.5 82.0L152.1 81.0M152.1 81.0L159.3 80.1M150.7 83.7L158.3 82.7M158.3 82.7L165.6 81.7M165.6 81.7L172.6 80.8M172.6 80.8L179.3 79.9M167.5 84.2L174.9 83.2M174.9 83.2L182.0 82.2M182.0 82.2L188.8 81.2M188.8 81.2L195.3 80.3M195.3 80.3L201.5 79.4M189.6 83.9L196.4 82.9M196.4 82.9L202.9 82.0M202.9 82.0L209.1 81.0M209.1 81.0L215.0 80.1M215.0 80.1L220.7 79.3M213.6 83.4L219.8 82.4M219.8 82.4L225.8 81.4M225.8 81.4L231.5 80.5M231.5 80.5L237.0 79.6M231.1 83.8L237.1 82.8M237.1 82.8L242.8 81.8M242.8 81.8L248.3 80.8M248.3 80.8L253.6 79.9M252.5 83.6L257.9 82.6M257.9 82.6L263.1 81.6M263.1 81.6L268.0 80.7M268.0 80.7L272.8 79.8M270.6 84.0L275.7 83.0M275.7 83.0L280.6 82.0M280.6 82.0L285.3 81.0M285.3 81.0L289.8 80.1M289.8 80.1L294.1 79.3M291.8 83.9L296.3 82.8M296.3 82.8L300.7 81.9M300.7 81.9L304.8 80.9M304.8 80.9L308.8 80.1M314.7 83.2L318.7 82.2M318.7 82.2L322.6 81.3M322.6 81.3L326.3 80.4M326.3 80.4L329.9 79.5M331.4 84.1L335.1 83.1M335.1 83.1L338.7 82.1M338.7 82.1L342.0 81.2M342.0 81.2L345.3 80.3M345.3 80.3L348.4 79.4M354.0 83.5L357.2 82.5M357.2 82.5L360.2 81.5M360.2 81.5L363.2 80.6M363.2 80.6L366.0 79.7M373.2 83.8L376.0 82.8M376.0 82.8L378.7 81.8M378.7 81.8L381.3 80.9M381.3 80.9L383.8 80.0M393.7 83.8L396.0 82.7M396.0 82.7L398.2 81.8M398.2 81.8L400.4 80.8M400.4 80.8L402.5 80.0M413.3 84.1L415.3 83.1M415.3 83.1L417.2 82.1M417.2 82.1L419.0 81.1M419.0 81.1L420.7 80.2M420.7 80.2L422.3 79.3M433.8 84.1L435.3 83.0M435.3 83.0L436.7 82.1M436.7 82.1L438.1 81.1M438.1 81.1L439.4 80.2M439.4 80.2L440.6 79.4M455.0 83.3L456.0 82.3M456.0 82.3L457.0 81.4M457.0 81.4L457.9 80.5M457.9 80.5L458.8 79.6M475.1 83.4L475.7 82.4M475.7 82.4L476.2 81.4M476.2 81.4L476.8 80.5M476.8 80.5L477.3 79.7M495.2 83.6L495.4 82.6M495.4 82.6L495.5 81.7M495.5 81.7L495.7 80.7M495.7 80.7L495.8 79.8M515.6 83.9L515.3 82.8M515.3 82.8L515.0 81.9M515.0 81.9L514.7 80.9M514.7 80.9L514.4 80.0M536.0 84.0L535.3 83.0M535.3 83.0L534.6 82.0M534.6 82.0L533.9 81.1M52.1 83.5L56.3 84.1M555.5 83.2L554.4 82.2M71.4 81.5L75.8 82.0M75.8 82.0L80.2 82.6M80.2 82.6L84.8 83.2M84.8 83.2L89.5 83.8M89.1 79.6L93.5 80.2M93.5 80.2L98.0 80.7M98.0 80.7L102.6 81.2M102.6 81.2L107.4 81.8M107.4 81.8L112.2 82.3M112.2 82.3L117.2 82.9M117.2 82.9L122.3 83.5M123.7 79.9L128.6 80.4M128.6 80.4L133.5 81.0M133.5 81.0L138.6 81.5M138.6 81.5L143.8 82.0M143.8 82.0L149.1 82.6M149.1 82.6L154.6 83.2M154.6 83.2L160.2 83.8M153.6 79.7L158.7 80.2M158.7 80.2L164.0 80.7M164.0 80.7L169.5 81.2M169.5 81.2L175.0 81.8M175.0 81.8L180.7 82.3M180.7 82.3L186.6 82.9M186.6 82.9L192.6 83.5M183.1 79.4L188.6 79.9M188.6 79.9L194.2 80.4M194.2 80.4L200.0 81.0M200.0 81.0L205.9 81.5M205.9 81.5L211.9 82.1M211.9 82.1L218.2 82.6M218.2 82.6L224.5 83.2M224.5 83.2L231.1 83.8M218.1 79.7L224.0 80.2M224.0 80.2L230.1 80.7M230.1 80.7L236.4 81.2M236.4 81.2L242.8 81.8M242.8 81.8L249.4 82.4M249.4 82.4L256.1 82.9M256.1 82.9L263.0 83.5M247.3 79.4L253.5 79.9M253.5 79.9L260.0 80.5M260.0 80.5L266.5 81.0M266.5 81.0L273.3 81.5M273.3 81.5L280.2 82.1M280.2 82.1L287.3 82.7M287.3 82.7L294.6 83.2M294.6 83.2L302.0 83.8M282.7 79.7L289.5 80.2M289.5 80.2L296.4 80.7M296.4 80.7L303.4 81.3M303.4 81.3L310.7 81.8M310.7 81.8L318.1 82.4M318.1 82.4L325.7 83.0M325.7 83.0L333.5 83.5M311.6 79.4L318.6 80.0M318.6 80.0L325.8 80.5M325.8 80.5L333.2 81.0M333.2 81.0L340.8 81.5M340.8 81.5L348.6 82.1M348.6 82.1L356.5 82.7M356.5 82.7L364.7 83.3M364.7 83.3L373.1 83.9M347.4 79.7L355.0 80.2M355.0 80.2L362.7 80.7M362.7 80.7L370.6 81.3M370.6 81.3L378.7 81.8M378.7 81.8L387.0 82.4M387.0 82.4L395.5 83.0M395.5 83.0L404.2 83.6M376.0 79.5L383.8 80.0M383.8 80.0L391.8 80.5M391.8 80.5L400.0 81.0M400.0 81.0L408.4 81.6M408.4 81.6L417.0 82.1M417.0 82.1L425.9 82.7M425.9 82.7L435.0 83.3M435.0 83.3L444.3 83.9M412.3 79.7L420.6 80.2M420.6 80.2L429.1 80.8M429.1 80.8L437.8 81.3M437.8 81.3L446.8 81.8M446.8 81.8L455.9 82.4M455.9 82.4L465.4 83.0M465.4 83.0L475.0 83.6M440.5 79.5L449.1 80.0M449.1 80.0L457.9 80.5M457.9 80.5L466.9 81.0M466.9 81.0L476.2 81.6M476.2 81.6L485.6 82.1M485.6 82.1L495.4 82.7M495.4 82.7L505.4 83.3M505.4 83.3L515.6 83.9M477.2 79.7L486.3 80.2M486.3 80.2L495.6 80.8M495.6 80.8L505.2 81.3M505.2 81.3L515.0 81.9M515.0 81.9L525.0 82.4M525.0 82.4L535.3 83.0M535.3 83.0L545.9 83.6M505.1 79.5L514.4 80.0M514.4 80.0L524.1 80.5M524.1 80.5L533.9 81.1M533.9 81.1L544.0 81.6M544.0 81.6L554.4 82.2M554.4 82.2L565.0 82.7M565.0 82.7L575.9 83.3M575.9 83.3L587.0 83.9" stroke="rgb(108, 108, 108)" /><path d="M4.8 88.4L16.5 87.1M16.5 87.1L27.8 86.0M27.8 86.0L38.5 84.9M38.5 84.9L48.7 83.8M32.2 87.8L43.3 86.6M43.3 86.6L53.9 85.4M53.9 85.4L64.1 84.3M64.1 84.3L73.8 83.3M47.1 88.6L57.9 87.4M57.9 87.4L68.1 86.2M68.1 86.2L78.0 85.1M78.0 85.1L87.3 84.0M74.3 88.0L84.4 86.8M84.4 86.8L94.1 85.6M94.1 85.6L103.3 84.5M103.3 84.5L112.1 83.5M101.1 87.4L110.6 86.2M110.6 86.2L119.7 85.1M119.7 85.1L128.3 84.0M116.7 88.2L125.8 87.0M125.8 87.0L134.5 85.9M134.5 85.9L142.8 84.8M142.8 84.8L150.7 83.7M143.2 87.6L151.7 86.4M151.7 86.4L159.8 85.3M159.8 85.3L167.5 84.2M159.3 88.5L167.5 87.3M167.5 87.3L175.2 86.1M175.2 86.1L182.6 85.0M182.6 85.0L189.6 83.9M185.6 87.9L193.1 86.7M193.1 86.7L200.2 85.5M200.2 85.5L207.0 84.4M207.0 84.4L213.6 83.4M204.2 88.5L211.4 87.2M211.4 87.2L218.3 86.0M218.3 86.0L224.9 84.9M224.9 84.9L231.1 83.8M228.3 88.1L234.8 86.9M234.8 86.9L241.0 85.8M241.0 85.8L246.9 84.7M246.9 84.7L252.5 83.6M253.8 87.4L259.7 86.3M259.7 86.3L265.3 85.1M265.3 85.1L270.6 84.0M271.4 88.4L276.8 87.2M276.8 87.2L282.1 86.0M282.1 86.0L287.0 84.9M287.0 84.9L291.8 83.9M296.5 87.7L301.4 86.5M301.4 86.5L306.0 85.4M306.0 85.4L310.4 84.3M310.4 84.3L314.7 83.2M319.3 87.5L323.6 86.3M323.6 86.3L327.6 85.2M327.6 85.2L331.4 84.1M339.6 88.0L343.5 86.8M343.5 86.8L347.1 85.6M347.1 85.6L350.6 84.5M350.6 84.5L354.0 83.5M360.4 88.5L363.8 87.2M363.8 87.2L367.1 86.1M367.1 86.1L370.2 84.9M370.2 84.9L373.2 83.8M383.2 88.3L386.0 87.1M386.0 87.1L388.7 85.9M388.7 85.9L391.2 84.8M391.2 84.8L393.7 83.8M406.9 87.5L409.1 86.3M409.1 86.3L411.3 85.2M411.3 85.2L413.3 84.1M429.0 87.4L430.7 86.2M430.7 86.2L432.3 85.1M432.3 85.1L433.8 84.1M450.5 87.8L451.7 86.6M451.7 86.6L452.9 85.5M452.9 85.5L454.0 84.4M454.0 84.4L455.0 83.3M472.6 87.7L473.3 86.6M473.3 86.6L473.9 85.5M473.9 85.5L474.5 84.4M474.5 84.4L475.1 83.4M494.6 88.2L494.8 86.9M494.8 86.9L494.9 85.8M494.9 85.8L495.1 84.7M495.1 84.7L495.2 83.6M516.6 87.3L516.3 86.1M516.3 86.1L515.9 85.0M515.9 85.0L515.6 83.9M31.0 85.6L35.1 86.3M35.1 86.3L39.4 87.0M39.4 87.0L43.9 87.7M538.5 87.3L537.6 86.1M537.6 86.1L536.8 85.0M536.8 85.0L536.0 84.0M56.3 84.1L60.7 84.7M60.7 84.7L65.2 85.3M65.2 85.3L69.7 86.0M69.7 86.0L74.5 86.6M74.5 86.6L79.3 87.3M79.3 87.3L84.3 88.0M560.7 87.6L559.3 86.4M559.3 86.4L558.0 85.3M558.0 85.3L556.7 84.2M556.7 84.2L555.5 83.2M89.5 83.8L94.4 84.4M94.4 84.4L99.3 85.0M99.3 85.0L104.4 85.7M104.4 85.7L109.7 86.3M109.7 86.3L115.0 87.0M115.0 87.0L120.6 87.7M582.9 87.7L581.0 86.5M581.0 86.5L579.2 85.4M579.2 85.4L577.5 84.3M577.5 84.3L575.9 83.3M122.3 83.5L127.5 84.1M127.5 84.1L132.9 84.7M132.9 84.7L138.4 85.4M138.4 85.4L144.1 86.0M144.1 86.0L149.9 86.7M149.9 86.7L155.9 87.4M155.9 87.4L162.0 88.1M605.6 88.0L603.1 86.8M603.1 86.8L600.8 85.6M600.8 85.6L598.5 84.5M160.2 83.8L166.0 84.4M166.0 84.4L171.9 85.0M171.9 85.0L178.0 85.7M178.0 85.7L184.3 86.4M184.3 86.4L190.7 87.0M190.7 87.0L197.3 87.7M192.6 83.5L198.7 84.1M198.7 84.1L205.1 84.7M205.1 84.7L211.6 85.4M211.6 85.4L218.2 86.0M218.2 86.0L225.1 86.7M225.1 86.7L232.1 87.4M232.1 87.4L239.4 88.1M231.1 83.8L237.8 84.4M237.8 84.4L244.7 85.1M244.7 85.1L251.7 85.7M251.7 85.7L259.0 86.4M259.0 86.4L266.5 87.1M266.5 87.1L274.2 87.8M263.0 83.5L270.1 84.1M270.1 84.1L277.4 84.8M277.4 84.8L284.8 85.4M284.8 85.4L292.5 86.1M292.5 86.1L300.4 86.7M300.4 86.7L308.5 87.4M308.5 87.4L316.9 88.1M302.0 83.8L309.7 84.5M309.7 84.5L317.5 85.1M317.5 85.1L325.6 85.7M325.6 85.7L333.9 86.4M333.9 86.4L342.4 87.1M342.4 87.1L351.2 87.8M333.5 83.5L341.6 84.2M341.6 84.2L349.8 84.8M349.8 84.8L358.3 85.4M358.3 85.4L367.0 86.1M367.0 86.1L375.9 86.8M375.9 86.8L385.1 87.5M385.1 87.5L394.5 88.2M373.1 83.9L381.7 84.5M381.7 84.5L390.5 85.1M390.5 85.1L399.6 85.8M399.6 85.8L408.9 86.4M408.9 86.4L418.5 87.1M418.5 87.1L428.4 87.8M404.2 83.6L413.2 84.2M413.2 84.2L422.4 84.8M422.4 84.8L431.8 85.4M431.8 85.4L441.5 86.1M441.5 86.1L451.5 86.8M451.5 86.8L461.8 87.5M461.8 87.5L472.4 88.2M444.3 83.9L453.8 84.5M453.8 84.5L463.7 85.1M463.7 85.1L473.7 85.8M473.7 85.8L484.1 86.5M484.1 86.5L494.8 87.1M494.8 87.1L505.7 87.9M475.0 83.6L484.9 84.2M484.9 84.2L495.1 84.8M495.1 84.8L505.5 85.5M505.5 85.5L516.3 86.1M516.3 86.1L527.3 86.8M527.3 86.8L538.6 87.5M538.6 87.5L550.3 88.2M515.6 83.9L526.1 84.5M526.1 84.5L536.9 85.2M536.9 85.2L548.0 85.8M548.0 85.8L559.4 86.5M559.4 86.5L571.1 87.2M571.1 87.2L583.2 87.9M545.9 83.6L556.8 84.2M556.8 84.2L567.9 84.8M567.9 84.8L579.3 85.5M579.3 85.5L591.1 86.2M591.1 86.2L603.2 86.8M603.2 86.8L615.6 87.5M587.0 83.9L598.5 84.5M598.5 84.5L610.3 85.2M610.3 85.2L618.0 85.6" stroke="rgb(112, 112, 112)" /><path d="M-3.0 89.2L4.8 88.4M-3.0 91.6L8.3 90.4M8.3 90.4L20.5 89.0M20.5 89.0L32.2 87.8M11.4 92.6L23.9 91.2M23.9 91.2L35.8 89.9M35.8 89.9L47.1 88.6M40.7 92.0L52.5 90.6M52.5 90.6L63.7 89.3M63.7 89.3L74.3 88.0M58.0 92.8L69.7 91.4M69.7 91.4L80.7 90.0M80.7 90.0L91.2 88.7M91.2 88.7L101.1 87.4M86.4 92.3L97.0 90.9M97.0 90.9L107.1 89.5M107.1 89.5L116.7 88.2M104.7 93.1L115.0 91.6M115.0 91.6L124.9 90.2M124.9 90.2L134.3 88.9M134.3 88.9L143.2 87.6M132.5 92.5L141.9 91.1M141.9 91.1L150.8 89.8M150.8 89.8L159.3 88.5M160.8 91.9L169.5 90.5M169.5 90.5L177.7 89.1M177.7 89.1L185.6 87.9M180.2 92.6L188.6 91.2M188.6 91.2L196.6 89.8M196.6 89.8L204.2 88.5M206.8 92.1L214.3 90.7M214.3 90.7L221.5 89.4M221.5 89.4L228.3 88.1M227.1 92.9L234.3 91.4M234.3 91.4L241.1 90.0M241.1 90.0L247.6 88.7M247.6 88.7L253.8 87.4M253.3 92.4L259.6 91.0M259.6 91.0L265.7 89.7M265.7 89.7L271.4 88.4M274.4 93.2L280.4 91.7M280.4 91.7L286.0 90.3M286.0 90.3L291.4 89.0M291.4 89.0L296.5 87.7M300.2 92.8L305.4 91.3M305.4 91.3L310.3 90.0M310.3 90.0L314.9 88.7M314.9 88.7L319.3 87.5M326.9 92.0L331.3 90.6M331.3 90.6L335.6 89.3M335.6 89.3L339.6 88.0M348.9 92.6L353.0 91.2M353.0 91.2L356.7 89.8M356.7 89.8L360.4 88.5M373.9 92.3L377.1 90.9M377.1 90.9L380.2 89.6M380.2 89.6L383.2 88.3M396.7 92.9L399.4 91.5M399.4 91.5L402.1 90.1M402.1 90.1L404.5 88.8M404.5 88.8L406.9 87.5M421.4 92.7L423.5 91.2M423.5 91.2L425.4 89.9M425.4 89.9L427.3 88.6M427.3 88.6L429.0 87.4M446.5 91.8L447.9 90.4M447.9 90.4L449.2 89.1M449.2 89.1L450.5 87.8M469.6 93.1L470.4 91.6M470.4 91.6L471.2 90.3M471.2 90.3L471.9 89.0M471.9 89.0L472.6 87.7M494.1 92.2L494.3 90.8M494.3 90.8L494.4 89.4M494.4 89.4L494.6 88.2M7.7 88.0L11.8 88.8M11.8 88.8L16.0 89.5M16.0 89.5L20.4 90.3M20.4 90.3L24.8 91.1M24.8 91.1L29.5 91.9M29.5 91.9L34.2 92.8M518.2 92.7L517.8 91.2M517.8 91.2L517.4 89.9M517.4 89.9L517.0 88.5M517.0 88.5L516.6 87.3M43.9 87.7L48.4 88.4M48.4 88.4L53.1 89.1M53.1 89.1L57.9 89.9M57.9 89.9L62.9 90.7M62.9 90.7L68.0 91.5M68.0 91.5L73.2 92.3M542.3 92.6L541.3 91.1M541.3 91.1L540.3 89.8M540.3 89.8L539.4 88.5M539.4 88.5L538.5 87.3M84.3 88.0L89.4 88.7M89.4 88.7L94.7 89.5M94.7 89.5L100.1 90.2M100.1 90.2L105.7 91.0M105.7 91.0L111.5 91.8M111.5 91.8L117.4 92.7M567.1 93.1L565.4 91.6M565.4 91.6L563.8 90.2M563.8 90.2L562.2 88.9M562.2 88.9L560.7 87.6M120.6 87.7L126.3 88.4M126.3 88.4L132.1 89.2M132.1 89.2L138.1 90.0M138.1 90.0L144.4 90.7M144.4 90.7L150.8 91.6M150.8 91.6L157.4 92.4M591.4 93.0L589.1 91.6M589.1 91.6L586.9 90.2M586.9 90.2L584.9 88.9M584.9 88.9L582.9 87.7M162.0 88.1L168.4 88.8M168.4 88.8L174.9 89.6M174.9 89.6L181.6 90.4M181.6 90.4L188.5 91.2M188.5 91.2L195.6 92.0M195.6 92.0L203.0 92.8M613.7 92.0L610.9 90.6M610.9 90.6L608.1 89.3M608.1 89.3L605.6 88.0M197.3 87.7L204.1 88.5M204.1 88.5L211.1 89.2M211.1 89.2L218.3 90.0M218.3 90.0L225.7 90.8M225.7 90.8L233.4 91.6M233.4 91.6L241.3 92.4M239.4 88.1L246.8 88.9M246.8 88.9L254.5 89.6M254.5 89.6L262.4 90.4M262.4 90.4L270.6 91.2M270.6 91.2L279.0 92.0M279.0 92.0L287.6 92.9M274.2 87.8L282.1 88.5M282.1 88.5L290.2 89.2M290.2 89.2L298.6 90.0M298.6 90.0L307.3 90.8M307.3 90.8L316.2 91.6M316.2 91.6L325.3 92.5M316.9 88.1L325.5 88.9M325.5 88.9L334.3 89.6M334.3 89.6L343.4 90.4M343.4 90.4L352.8 91.2M352.8 91.2L362.5 92.1M351.2 87.8L360.2 88.5M360.2 88.5L369.5 89.3M369.5 89.3L379.1 90.0M379.1 90.0L389.0 90.8M389.0 90.8L399.1 91.7M399.1 91.7L409.6 92.5M394.5 88.2L404.3 88.9M404.3 88.9L414.3 89.7M414.3 89.7L424.6 90.5M424.6 90.5L435.2 91.3M435.2 91.3L446.2 92.1M428.4 87.8L438.5 88.6M438.5 88.6L449.0 89.3M449.0 89.3L459.7 90.1M459.7 90.1L470.8 90.9M470.8 90.9L482.2 91.7M482.2 91.7L494.0 92.5M472.4 88.2L483.2 88.9M483.2 88.9L494.4 89.7M494.4 89.7L505.9 90.5M505.9 90.5L517.8 91.3M517.8 91.3L530.0 92.1M505.7 87.9L517.0 88.6M517.0 88.6L528.6 89.3M528.6 89.3L540.5 90.1M540.5 90.1L552.8 90.9M552.8 90.9L565.5 91.7M565.5 91.7L578.6 92.6M550.3 88.2L562.3 89.0M562.3 89.0L574.7 89.7M574.7 89.7L587.4 90.5M587.4 90.5L600.5 91.3M600.5 91.3L614.0 92.2M583.2 87.9L595.6 88.6M595.6 88.6L608.3 89.4M608.3 89.4L618.0 89.9M615.6 87.5L618.0 87.7" stroke="rgb(116, 116, 116)" /><path d="M-3.0 94.3L-1.8 94.1M-1.8 94.1L11.4 92.6M1.4 96.7L15.2 95.0M15.2 95.0L28.3 93.5M28.3 93.5L40.7 92.0M19.1 97.7L32.8 96.0M32.8 96.0L45.8 94.4M45.8 94.4L58.0 92.8M51.0 97.0L63.5 95.3M63.5 95.3L75.2 93.7M75.2 93.7L86.4 92.3M69.8 98.0L82.1 96.2M82.1 96.2L93.7 94.6M93.7 94.6L104.7 93.1M101.0 97.3L112.1 95.6M112.1 95.6L122.5 94.0M122.5 94.0L132.5 92.5M131.7 96.5L141.9 94.9M141.9 94.9L151.6 93.3M151.6 93.3L160.8 91.9M152.0 97.5L161.9 95.8M161.9 95.8L171.3 94.1M171.3 94.1L180.2 92.6M181.7 96.8L190.5 95.2M190.5 95.2L198.9 93.6M198.9 93.6L206.8 92.1M203.0 97.8L211.5 96.0M211.5 96.0L219.5 94.4M219.5 94.4L227.1 92.9M232.1 97.1L239.6 95.5M239.6 95.5L246.6 93.9M246.6 93.9L253.3 92.4M254.5 98.1L261.5 96.3M261.5 96.3L268.1 94.7M268.1 94.7L274.4 93.2M283.1 97.5L289.1 95.8M289.1 95.8L294.8 94.2M294.8 94.2L300.2 92.8M312.0 96.7L317.2 95.0M317.2 95.0L322.2 93.5M322.2 93.5L326.9 92.0M335.5 97.5L340.3 95.8M340.3 95.8L344.7 94.2M344.7 94.2L348.9 92.6M363.0 97.0L366.8 95.4M366.8 95.4L370.4 93.8M370.4 93.8L373.9 92.3M387.5 97.8L390.7 96.1M390.7 96.1L393.8 94.5M393.8 94.5L396.7 92.9M414.6 97.4L417.0 95.7M417.0 95.7L419.2 94.2M419.2 94.2L421.4 92.7M441.7 96.5L443.4 94.8M443.4 94.8L445.0 93.3M445.0 93.3L446.5 91.8M466.8 97.8L467.8 96.1M467.8 96.1L468.7 94.6M468.7 94.6L469.6 93.1M-3.0 93.8L-1.8 94.0M-1.8 94.0L2.5 94.9M2.5 94.9L7.0 95.8M7.0 95.8L11.6 96.8M11.6 96.8L16.3 97.8M493.4 96.9L493.6 95.2M493.6 95.2L493.8 93.6M493.8 93.6L494.1 92.2M34.2 92.8L39.1 93.7M39.1 93.7L44.2 94.6M44.2 94.6L49.4 95.5M49.4 95.5L54.8 96.5M54.8 96.5L60.4 97.5M519.6 97.6L519.1 95.9M519.1 95.9L518.7 94.2M518.7 94.2L518.2 92.7M73.2 92.3L78.7 93.2M78.7 93.2L84.3 94.0M84.3 94.0L90.1 95.0M90.1 95.0L96.0 95.9M96.0 95.9L102.2 96.9M545.8 97.3L544.6 95.6M544.6 95.6L543.4 94.1M543.4 94.1L542.3 92.6M117.4 92.7L123.5 93.5M123.5 93.5L129.8 94.4M129.8 94.4L136.3 95.3M136.3 95.3L143.0 96.3M143.0 96.3L150.0 97.2M572.8 98.0L570.8 96.2M570.8 96.2L568.9 94.6M568.9 94.6L567.1 93.1M157.4 92.4L164.2 93.3M164.2 93.3L171.2 94.2M171.2 94.2L178.4 95.1M178.4 95.1L185.9 96.0M185.9 96.0L193.7 97.0M599.0 97.8L596.3 96.1M596.3 96.1L593.8 94.5M593.8 94.5L591.4 93.0M203.0 92.8L210.6 93.7M210.6 93.7L218.4 94.6M218.4 94.6L226.5 95.6M226.5 95.6L234.9 96.5M234.9 96.5L243.5 97.5M618.0 94.1L616.7 93.5M616.7 93.5L613.7 92.0M241.3 92.4L249.4 93.3M249.4 93.3L257.8 94.2M257.8 94.2L266.4 95.1M266.4 95.1L275.4 96.1M275.4 96.1L284.6 97.1M287.6 92.9L296.6 93.8M296.6 93.8L305.8 94.7M305.8 94.7L315.3 95.6M315.3 95.6L325.2 96.6M325.2 96.6L335.3 97.6M325.3 92.5L334.8 93.3M334.8 93.3L344.6 94.2M344.6 94.2L354.6 95.2M354.6 95.2L365.1 96.1M365.1 96.1L375.8 97.1M362.5 92.1L372.5 92.9M372.5 92.9L382.8 93.8M382.8 93.8L393.4 94.7M393.4 94.7L404.3 95.6M404.3 95.6L415.7 96.6M415.7 96.6L427.4 97.6M409.6 92.5L420.4 93.4M420.4 93.4L431.5 94.3M431.5 94.3L443.0 95.2M443.0 95.2L454.9 96.1M454.9 96.1L467.2 97.1M446.2 92.1L457.5 92.9M457.5 92.9L469.1 93.8M469.1 93.8L481.1 94.7M481.1 94.7L493.6 95.7M493.6 95.7L506.4 96.7M506.4 96.7L519.7 97.7M494.0 92.5L506.1 93.4M506.1 93.4L518.7 94.3M518.7 94.3L531.6 95.2M531.6 95.2L545.0 96.2M545.0 96.2L558.8 97.2M530.0 92.1L542.6 93.0M542.6 93.0L555.7 93.9M555.7 93.9L569.1 94.8M569.1 94.8L583.0 95.7M583.0 95.7L597.3 96.7M578.6 92.6L592.1 93.4M592.1 93.4L606.0 94.3M606.0 94.3L618.0 95.1M614.0 92.2L618.0 92.4" stroke="rgb(121, 121, 121)" /><path d="M-3.0 97.2L1.4 96.7M-3.0 100.5L4.6 99.5M4.6 99.5L19.1 97.7M9.0 102.5L23.9 100.6M23.9 100.6L37.8 98.7M37.8 98.7L51.0 97.0M43.0 101.8L56.8 99.8M56.8 99.8L69.8 98.0M63.6 102.9L76.8 100.9M76.8 100.9L89.3 99.0M89.3 99.0L101.0 97.3M97.2 102.1L109.4 100.1M109.4 100.1L120.9 98.3M120.9 98.3L131.7 96.5M118.3 103.3L130.3 101.2M130.3 101.2L141.4 99.3M141.4 99.3L152.0 97.5M151.9 102.4L162.4 100.4M162.4 100.4L172.3 98.6M172.3 98.6L181.7 96.8M184.5 101.5L194.0 99.6M194.0 99.6L203.0 97.8M207.0 102.7L215.9 100.8M215.9 100.8L224.2 98.9M224.2 98.9L232.1 97.1M239.1 101.9L247.0 99.9M247.0 99.9L254.5 98.1M262.7 103.1L269.9 101.1M269.9 101.1L276.7 99.3M276.7 99.3L283.1 97.5M294.3 102.2L300.5 100.3M300.5 100.3L306.4 98.4M306.4 98.4L312.0 96.7M319.6 103.3L325.2 101.3M325.2 101.3L330.5 99.3M330.5 99.3L335.5 97.5M350.0 102.6L354.6 100.6M354.6 100.6L358.9 98.8M358.9 98.8L363.0 97.0M380.4 101.6L384.0 99.7M384.0 99.7L387.5 97.8M406.4 103.0L409.3 101.0M409.3 101.0L412.0 99.2M412.0 99.2L414.6 97.4M436.2 102.0L438.1 100.1M438.1 100.1L440.0 98.2M440.0 98.2L441.7 96.5M464.7 101.5L465.8 99.6M465.8 99.6L466.8 97.8M16.3 97.8L21.3 98.8M21.3 98.8L26.4 99.8M26.4 99.8L31.6 100.9M31.6 100.9L37.1 102.1M492.6 102.4L492.9 100.5M492.9 100.5L493.2 98.6M493.2 98.6L493.4 96.9M60.4 97.5L66.1 98.5M66.1 98.5L72.1 99.5M72.1 99.5L78.3 100.7M78.3 100.7L84.7 101.8M84.7 101.8L91.3 103.0M520.8 101.3L520.2 99.4M520.2 99.4L519.6 97.6M102.2 96.9L108.6 97.9M108.6 97.9L115.2 98.9M115.2 98.9L122.0 100.0M122.0 100.0L129.1 101.1M129.1 101.1L136.4 102.2M549.9 102.9L548.4 100.9M548.4 100.9L547.1 99.1M547.1 99.1L545.8 97.3M150.0 97.2L157.2 98.3M157.2 98.3L164.6 99.3M164.6 99.3L172.3 100.4M172.3 100.4L180.2 101.5M180.2 101.5L188.5 102.7M577.2 101.8L575.0 99.8M575.0 99.8L572.8 98.0M193.7 97.0L201.7 98.0M201.7 98.0L210.0 99.1M210.0 99.1L218.5 100.2M218.5 100.2L227.4 101.3M227.4 101.3L236.6 102.5M604.9 101.4L601.9 99.5M601.9 99.5L599.0 97.8M243.5 97.5L252.4 98.6M252.4 98.6L261.7 99.6M261.7 99.6L271.2 100.8M271.2 100.8L281.2 101.9M284.6 97.1L294.2 98.1M294.2 98.1L304.1 99.1M304.1 99.1L314.4 100.2M314.4 100.2L325.0 101.4M325.0 101.4L336.0 102.5M335.3 97.6L345.9 98.6M345.9 98.6L356.8 99.7M356.8 99.7L368.0 100.8M368.0 100.8L379.7 102.0M375.8 97.1L387.0 98.1M387.0 98.1L398.5 99.2M398.5 99.2L410.4 100.3M410.4 100.3L422.8 101.4M422.8 101.4L435.6 102.6M427.4 97.6L439.5 98.7M439.5 98.7L452.1 99.7M452.1 99.7L465.1 100.9M465.1 100.9L478.5 102.0M467.2 97.1L479.9 98.2M479.9 98.2L493.1 99.2M493.1 99.2L506.7 100.3M506.7 100.3L520.8 101.5M520.8 101.5L535.4 102.6M519.7 97.7L533.4 98.7M533.4 98.7L547.6 99.8M547.6 99.8L562.3 100.9M562.3 100.9L577.6 102.1M558.8 97.2L573.1 98.2M573.1 98.2L587.9 99.3M587.9 99.3L603.2 100.4M603.2 100.4L618.0 101.4M597.3 96.7L612.1 97.7M612.1 97.7L618.0 98.1" stroke="rgb(125, 125, 125)" /><path d="M-3.0 104.1L9.0 102.5M-3.0 108.2L12.6 106.0M12.6 106.0L28.3 103.8M28.3 103.8L43.0 101.8M34.6 107.2L49.6 105.0M49.6 105.0L63.6 102.9M55.6 108.7L70.4 106.4M70.4 106.4L84.2 104.1M84.2 104.1L97.2 102.1M92.1 107.8L105.6 105.5M105.6 105.5L118.3 103.3M115.9 109.1L128.7 106.7M128.7 106.7L140.7 104.5M140.7 104.5L151.9 102.4M151.9 108.2L163.4 105.8M163.4 105.8L174.3 103.6M174.3 103.6L184.5 101.5M187.5 107.1L197.6 104.8M197.6 104.8L207.0 102.7M212.1 108.5L221.7 106.1M221.7 106.1L230.7 103.9M230.7 103.9L239.1 101.9M246.8 107.5L255.0 105.2M255.0 105.2L262.7 103.1M273.0 108.9L280.6 106.5M280.6 106.5L287.6 104.3M287.6 104.3L294.3 102.2M307.1 107.9L313.5 105.5M313.5 105.5L319.6 103.3M340.0 106.9L345.2 104.7M345.2 104.7L350.0 102.6M367.9 108.3L372.3 105.9M372.3 105.9L376.5 103.7M376.5 103.7L380.4 101.6M400.1 107.4L403.4 105.1M403.4 105.1L406.4 103.0M429.4 108.7L431.8 106.3M431.8 106.3L434.0 104.1M434.0 104.1L436.2 102.0M-3.0 104.2L1.1 105.2M1.1 105.2L6.3 106.5M6.3 106.5L11.9 107.9M461.0 107.9L462.3 105.6M462.3 105.6L463.6 103.5M463.6 103.5L464.7 101.5M37.1 102.1L42.8 103.2M42.8 103.2L48.6 104.4M48.6 104.4L54.7 105.7M54.7 105.7L61.0 107.0M61.0 107.0L67.6 108.4M492.0 106.8L492.3 104.5M492.3 104.5L492.6 102.4M91.3 103.0L98.2 104.2M98.2 104.2L105.4 105.5M105.4 105.5L112.8 106.8M112.8 106.8L120.5 108.2M522.7 107.9L522.0 105.6M522.0 105.6L521.4 103.4M521.4 103.4L520.8 101.3M136.4 102.2L144.0 103.4M144.0 103.4L151.8 104.7M151.8 104.7L160.0 106.0M160.0 106.0L168.5 107.3M553.1 107.3L551.4 105.0M551.4 105.0L549.9 102.9M188.5 102.7L197.0 103.9M197.0 103.9L205.9 105.1M205.9 105.1L215.1 106.4M215.1 106.4L224.7 107.7M585.0 108.4L582.2 106.0M582.2 106.0L579.7 103.8M579.7 103.8L577.2 101.8M236.6 102.5L246.2 103.7M246.2 103.7L256.1 105.0M256.1 105.0L266.4 106.3M266.4 106.3L277.1 107.6M615.1 107.8L611.5 105.5M611.5 105.5L608.1 103.4M608.1 103.4L604.9 101.4M281.2 101.9L291.5 103.1M291.5 103.1L302.1 104.3M302.1 104.3L313.2 105.6M313.2 105.6L324.7 107.0M324.7 107.0L336.7 108.4M336.0 102.5L347.4 103.7M347.4 103.7L359.2 105.0M359.2 105.0L371.5 106.3M371.5 106.3L384.3 107.7M379.7 102.0L391.9 103.2M391.9 103.2L404.4 104.4M404.4 104.4L417.5 105.7M417.5 105.7L431.1 107.0M431.1 107.0L445.2 108.4M435.6 102.6L448.9 103.8M448.9 103.8L462.7 105.1M462.7 105.1L477.0 106.4M477.0 106.4L491.9 107.7M478.5 102.0L492.5 103.2M492.5 103.2L507.0 104.5M507.0 104.5L522.1 105.7M522.1 105.7L537.7 107.1M537.7 107.1L554.0 108.5M535.4 102.6L550.6 103.9M550.6 103.9L566.3 105.1M566.3 105.1L582.7 106.4M582.7 106.4L599.7 107.8M577.6 102.1L593.4 103.3M593.4 103.3L609.8 104.5M609.8 104.5L618.0 105.1" stroke="rgb(130, 130, 130)" /><path d="M-3.0 112.9L1.5 112.2M1.5 112.2L18.6 109.6M18.6 109.6L34.6 107.2M22.8 114.0L39.8 111.3M39.8 111.3L55.6 108.7M62.0 113.0L77.5 110.3M77.5 110.3L92.1 107.8M87.5 114.4L102.2 111.7M102.2 111.7L115.9 109.1M126.1 113.4L139.4 110.7M139.4 110.7L151.9 108.2M152.8 114.8L165.2 112.1M165.2 112.1L176.7 109.5M176.7 109.5L187.5 107.1M190.8 113.8L201.9 111.0M201.9 111.0L212.1 108.5M218.7 115.3L228.8 112.5M228.8 112.5L238.1 109.9M238.1 109.9L246.8 107.5M256.2 114.2L264.9 111.5M264.9 111.5L273.0 108.9M292.8 113.1L300.2 110.4M300.2 110.4L307.1 107.9M322.1 114.6L328.5 111.9M328.5 111.9L334.4 109.3M334.4 109.3L340.0 106.9M358.1 113.5L363.2 110.8M363.2 110.8L367.9 108.3M388.9 115.1L392.9 112.4M392.9 112.4L396.6 109.8M396.6 109.8L400.1 107.4M424.1 113.9L426.8 111.2M426.8 111.2L429.4 108.7M11.9 107.9L17.6 109.3M17.6 109.3L23.5 110.7M23.5 110.7L29.7 112.3M29.7 112.3L36.2 113.8M458.1 112.9L459.6 110.3M459.6 110.3L461.0 107.9M67.6 108.4L74.4 109.8M74.4 109.8L81.5 111.2M81.5 111.2L88.9 112.8M88.9 112.8L96.6 114.4M490.9 114.4L491.3 111.7M491.3 111.7L491.7 109.1M491.7 109.1L492.0 106.8M120.5 108.2L128.5 109.6M128.5 109.6L136.9 111.1M136.9 111.1L145.6 112.7M145.6 112.7L154.7 114.3M524.2 113.1L523.4 110.4M523.4 110.4L522.7 107.9M168.5 107.3L177.3 108.7M177.3 108.7L186.5 110.1M186.5 110.1L196.1 111.7M196.1 111.7L206.1 113.2M558.7 115.0L556.7 112.2M556.7 112.2L554.8 109.7M554.8 109.7L553.1 107.3M224.7 107.7L234.6 109.1M234.6 109.1L245.0 110.6M245.0 110.6L255.8 112.1M255.8 112.1L267.0 113.7M591.1 113.6L587.9 110.9M587.9 110.9L585.0 108.4M277.1 107.6L288.2 109.0M288.2 109.0L299.8 110.5M299.8 110.5L311.9 112.0M311.9 112.0L324.5 113.6M618.0 109.6L615.1 107.8M336.7 108.4L349.2 109.8M349.2 109.8L362.2 111.3M362.2 111.3L375.7 112.9M375.7 112.9L389.8 114.5M384.3 107.7L397.6 109.1M397.6 109.1L411.5 110.6M411.5 110.6L425.9 112.1M425.9 112.1L441.0 113.7M445.2 108.4L459.9 109.9M459.9 109.9L475.2 111.4M475.2 111.4L491.2 112.9M491.2 112.9L507.8 114.6M491.9 107.7L507.4 109.2M507.4 109.2L523.5 110.6M523.5 110.6L540.3 112.2M540.3 112.2L557.9 113.8M554.0 108.5L570.9 109.9M570.9 109.9L588.5 111.4M588.5 111.4L606.9 113.0M606.9 113.0L618.0 114.0M599.7 107.8L617.4 109.2M617.4 109.2L618.0 109.3" stroke="rgb(134, 134, 134)" /><path d="M-3.0 118.2L4.6 116.9M4.6 116.9L22.8 114.0M27.0 119.1L45.2 115.9M45.2 115.9L62.0 113.0M54.7 120.5L71.7 117.3M71.7 117.3L87.5 114.4M96.3 119.4L111.8 116.3M111.8 116.3L126.1 113.4M125.1 121.0L139.5 117.8M139.5 117.8L152.8 114.8M166.2 119.9L179.0 116.7M179.0 116.7L190.8 113.8M196.3 121.5L207.9 118.3M207.9 118.3L218.7 115.3M236.7 120.3L246.8 117.1M246.8 117.1L256.2 114.2M276.2 119.1L284.8 116.0M284.8 116.0L292.8 113.1M307.9 120.8L315.3 117.6M315.3 117.6L322.1 114.6M346.7 119.5L352.6 116.4M352.6 116.4L358.1 113.5M380.0 121.3L384.6 118.1M384.6 118.1L388.9 115.1M-3.0 119.5L-0.4 120.3M417.9 120.0L421.1 116.9M421.1 116.9L424.1 113.9M36.2 113.8L42.9 115.5M42.9 115.5L50.0 117.2M50.0 117.2L57.3 119.0M57.3 119.0L65.0 120.9M453.0 121.9L454.8 118.7M454.8 118.7L456.5 115.7M456.5 115.7L458.1 112.9M96.6 114.4L104.7 116.0M104.7 116.0L113.1 117.8M113.1 117.8L121.9 119.6M121.9 119.6L131.0 121.5M490.1 120.6L490.5 117.4M490.5 117.4L490.9 114.4M154.7 114.3L164.3 116.0M164.3 116.0L174.2 117.8M174.2 117.8L184.6 119.7M526.0 119.2L525.1 116.0M525.1 116.0L524.2 113.1M206.1 113.2L216.5 114.9M216.5 114.9L227.4 116.6M227.4 116.6L238.7 118.4M238.7 118.4L250.6 120.2M563.3 121.2L560.9 118.0M560.9 118.0L558.7 115.0M267.0 113.7L278.7 115.3M278.7 115.3L291.0 117.1M291.0 117.1L303.7 118.9M303.7 118.9L317.1 120.8M598.2 119.7L594.5 116.6M594.5 116.6L591.1 113.6M324.5 113.6L337.6 115.3M337.6 115.3L351.3 117.1M351.3 117.1L365.7 118.9M365.7 118.9L380.7 120.8M389.8 114.5L404.6 116.2M404.6 116.2L420.0 118.0M420.0 118.0L436.1 119.9M441.0 113.7L456.7 115.4M456.7 115.4L473.1 117.1M473.1 117.1L490.3 119.0M490.3 119.0L508.3 120.9M507.8 114.6L525.2 116.3M525.2 116.3L543.4 118.1M543.4 118.1L562.4 120.0M557.9 113.8L576.2 115.5M576.2 115.5L595.3 117.2M595.3 117.2L615.3 119.1M615.3 119.1L618.0 119.3" stroke="rgb(138, 138, 138)" /><path d="M-3.0 124.2L7.4 122.4M7.4 122.4L27.0 119.1M16.1 127.7L36.2 124.0M36.2 124.0L54.7 120.5M61.4 126.5L79.6 122.8M79.6 122.8L96.3 119.4M92.7 128.2L109.6 124.5M109.6 124.5L125.1 121.0M137.2 127.0L152.3 123.3M152.3 123.3L166.2 119.9M169.9 128.7L183.7 125.0M183.7 125.0L196.3 121.5M213.8 127.5L225.7 123.7M225.7 123.7L236.7 120.3M256.7 126.2L266.9 122.5M266.9 122.5L276.2 119.1M291.2 128.0L299.9 124.3M299.9 124.3L307.9 120.8M333.3 126.7L340.3 123.0M340.3 123.0L346.7 119.5M369.5 128.6L374.9 124.8M374.9 124.8L380.0 121.3M-0.4 120.3L6.1 122.2M6.1 122.2L13.0 124.3M13.0 124.3L20.1 126.4M20.1 126.4L27.7 128.7M410.7 127.2L414.5 123.5M414.5 123.5L417.9 120.0M65.0 120.9L73.1 122.9M73.1 122.9L81.5 125.0M81.5 125.0L90.4 127.1M448.8 129.2L450.9 125.4M450.9 125.4L453.0 121.9M131.0 121.5L140.6 123.5M140.6 123.5L150.7 125.6M150.7 125.6L161.3 127.7M489.1 127.8L489.6 124.0M489.6 124.0L490.1 120.6M184.6 119.7L195.5 121.6M195.5 121.6L206.9 123.6M206.9 123.6L218.8 125.8M218.8 125.8L231.4 128.0M528.1 126.3L527.0 122.6M527.0 122.6L526.0 119.2M250.6 120.2L263.0 122.2M263.0 122.2L276.1 124.2M276.1 124.2L289.8 126.4M289.8 126.4L304.1 128.7M568.6 128.4L565.8 124.7M565.8 124.7L563.3 121.2M317.1 120.8L331.1 122.7M331.1 122.7L345.8 124.8M345.8 124.8L361.2 127.0M606.5 126.9L602.2 123.1M602.2 123.1L598.2 119.7M380.7 120.8L396.5 122.8M396.5 122.8L413.0 124.9M413.0 124.9L430.4 127.1M436.1 119.9L453.0 121.8M453.0 121.8L470.7 123.9M470.7 123.9L489.3 126.0M489.3 126.0L508.9 128.3M508.3 120.9L527.1 122.9M527.1 122.9L546.9 125.0M546.9 125.0L567.7 127.2M562.4 120.0L582.3 121.9M582.3 121.9L603.2 124.0M603.2 124.0L618.0 125.5" stroke="rgb(143, 143, 143)" /><path d="M-3.0 131.3L16.1 127.7M19.8 135.0L41.5 130.6M41.5 130.6L61.4 126.5M54.1 136.8L74.2 132.3M74.2 132.3L92.7 128.2M102.8 135.5L120.8 131.0M120.8 131.0L137.2 127.0M138.6 137.4L155.0 132.9M155.0 132.9L169.9 128.7M186.6 136.0L200.8 131.6M200.8 131.6L213.8 127.5M233.6 134.6L245.7 130.2M245.7 130.2L256.7 126.2M271.3 136.6L281.7 132.1M281.7 132.1L291.2 128.0M317.4 135.1L325.7 130.7M325.7 130.7L333.3 126.7M357.0 137.2L363.5 132.7M363.5 132.7L369.5 128.6M27.7 128.7L35.6 131.1M35.6 131.1L43.9 133.6M43.9 133.6L52.7 136.3M402.1 135.7L406.6 131.3M406.6 131.3L410.7 127.2M90.4 127.1L99.7 129.4M99.7 129.4L109.5 131.8M109.5 131.8L119.8 134.3M119.8 134.3L130.7 137.0M443.8 137.9L446.4 133.4M446.4 133.4L448.8 129.2M161.3 127.7L172.4 130.0M172.4 130.0L184.1 132.5M184.1 132.5L196.4 135.0M487.9 136.3L488.5 131.9M488.5 131.9L489.1 127.8M231.4 128.0L244.7 130.4M244.7 130.4L258.6 132.9M258.6 132.9L273.3 135.5M530.6 134.7L529.3 130.3M529.3 130.3L528.1 126.3M304.1 128.7L319.3 131.0M319.3 131.0L335.2 133.6M335.2 133.6L352.0 136.2M574.9 137.1L571.6 132.6M571.6 132.6L568.6 128.4M361.2 127.0L377.4 129.2M377.4 129.2L394.5 131.6M394.5 131.6L412.4 134.2M412.4 134.2L431.4 136.8M616.4 135.3L611.2 130.9M611.2 130.9L606.5 126.9M430.4 127.1L448.6 129.4M448.6 129.4L467.9 131.9M467.9 131.9L488.1 134.5M508.9 128.3L529.4 130.7M529.4 130.7L551.1 133.2M551.1 133.2L574.0 135.9M567.7 127.2L589.5 129.5M589.5 129.5L612.5 132.0M612.5 132.0L618.0 132.6" stroke="rgb(147, 147, 147)" /><path d="M-3.0 139.6L19.8 135.0M7.4 147.2L31.9 141.8M31.9 141.8L54.1 136.8M61.3 145.7L83.1 140.3M83.1 140.3L102.8 135.5M120.7 142.4L138.6 137.4M153.8 146.3L171.0 140.9M171.0 140.9L186.6 136.0M205.7 144.7L220.3 139.4M220.3 139.4L233.6 134.6M247.3 147.0L259.9 141.5M259.9 141.5L271.3 136.6M298.2 145.3L308.3 140.0M308.3 140.0L317.4 135.1M-3.0 143.7L-0.2 144.8M349.8 142.2L357.0 137.2M52.7 136.3L62.1 139.1M62.1 139.1L71.9 142.0M71.9 142.0L82.3 145.2M391.7 146.0L397.2 140.6M397.2 140.6L402.1 135.7M130.7 137.0L142.2 139.8M142.2 139.8L154.4 142.8M154.4 142.8L167.3 146.0M440.9 142.9L443.8 137.9M196.4 135.0L209.4 137.7M209.4 137.7L223.2 140.5M223.2 140.5L237.7 143.5M486.4 146.7L487.2 141.3M487.2 141.3L487.9 136.3M273.3 135.5L288.9 138.3M288.9 138.3L305.3 141.2M305.3 141.2L322.8 144.4M533.6 144.8L532.0 139.5M532.0 139.5L530.6 134.7M352.0 136.2L369.8 139.0M369.8 139.0L388.6 142.0M388.6 142.0L408.6 145.1M582.5 147.5L578.5 142.0M578.5 142.0L574.9 137.1M431.4 136.8L451.4 139.6M451.4 139.6L472.6 142.6M472.6 142.6L495.0 145.8M618.0 136.7L616.4 135.3M488.1 134.5L509.6 137.2M509.6 137.2L532.2 140.1M532.2 140.1L556.2 143.1M556.2 143.1L581.7 146.3M574.0 135.9L598.2 138.7M598.2 138.7L618.0 141.0" stroke="rgb(151, 151, 151)" /><path d="M-3.0 149.5L7.4 147.2M10.1 158.4L37.1 151.7M37.1 151.7L61.3 145.7M78.8 153.9L100.8 147.8M100.8 147.8L120.7 142.4M134.7 152.3L153.8 146.3M171.2 157.3L189.4 150.7M189.4 150.7L205.7 144.7M233.3 153.0L247.3 147.0M274.5 157.9L287.0 151.3M287.0 151.3L298.2 145.3M-0.2 144.8L8.1 148.0M8.1 148.0L16.9 151.4M16.9 151.4L26.2 155.1M333.1 153.7L341.9 147.7M341.9 147.7L349.8 142.2M82.3 145.2L93.4 148.5M93.4 148.5L105.2 152.0M105.2 152.0L117.8 155.8M385.7 152.0L391.7 146.0M167.3 146.0L181.0 149.3M181.0 149.3L195.6 152.9M195.6 152.9L211.1 156.7M434.2 154.6L437.7 148.4M437.7 148.4L440.9 142.9M237.7 143.5L253.1 146.7M253.1 146.7L269.5 150.1M269.5 150.1L286.9 153.7M485.6 152.7L486.4 146.7M322.8 144.4L341.3 147.7M341.3 147.7L361.0 151.2M361.0 151.2L382.0 155.0M537.3 157.4L535.4 150.8M535.4 150.8L533.6 144.8M408.6 145.1L429.7 148.4M429.7 148.4L452.3 152.0M452.3 152.0L476.3 155.8M586.9 153.5L582.5 147.5M495.0 145.8L518.9 149.1M518.9 149.1L544.2 152.7M544.2 152.7L571.3 156.5M581.7 146.3L608.7 149.8M608.7 149.8L618.0 151.0" stroke="rgb(156, 156, 156)" /><path d="M-3.0 161.6L10.1 158.4M26.6 168.4L54.2 160.7M54.2 160.7L78.8 153.9M89.4 166.6L113.4 159.0M113.4 159.0L134.7 152.3M150.8 164.7L171.2 157.3M200.2 167.3L217.7 159.7M217.7 159.7L233.3 153.0M260.5 165.4L274.5 157.9M26.2 155.1L36.2 158.9M36.2 158.9L46.8 163.1M46.8 163.1L58.2 167.5M312.3 168.1L323.3 160.5M323.3 160.5L333.1 153.7M117.8 155.8L131.2 159.9M131.2 159.9L145.6 164.2M145.6 164.2L161.0 168.8M371.4 166.1L378.9 158.6M378.9 158.6L385.7 152.0M211.1 156.7L227.8 160.8M227.8 160.8L245.5 165.2M425.9 169.1L430.3 161.4M430.3 161.4L434.2 154.6M286.9 153.7L305.5 157.5M305.5 157.5L325.3 161.6M325.3 161.6L346.5 166.0M483.6 167.0L484.7 159.4M484.7 159.4L485.6 152.7M382.0 155.0L404.4 159.0M404.4 159.0L428.4 163.3M428.4 163.3L454.2 167.9M539.5 164.8L537.3 157.4M476.3 155.8L501.9 159.8M501.9 159.8L529.4 164.1M597.4 167.9L591.9 160.3M591.9 160.3L586.9 153.5M571.3 156.5L600.2 160.6M600.2 160.6L618.0 163.1" stroke="rgb(160, 160, 160)" /><path d="M-3.0 176.5L26.6 168.4M31.3 184.8L62.2 175.1M62.2 175.1L89.4 166.6M101.4 182.7L127.7 173.1M127.7 173.1L150.8 164.7M180.4 175.9L200.2 167.3M226.5 183.5L244.6 173.8M244.6 173.8L260.5 165.4M58.2 167.5L70.4 172.3M70.4 172.3L83.6 177.4M299.8 176.8L312.3 168.1M161.0 168.8L177.6 173.8M177.6 173.8L195.5 179.2M353.0 184.3L362.8 174.6M362.8 174.6L371.4 166.1M245.5 165.2L264.6 169.8M264.6 169.8L285.1 174.9M285.1 174.9L307.3 180.3M420.9 177.7L425.9 169.1M346.5 166.0L369.3 170.7M369.3 170.7L393.8 175.8M393.8 175.8L420.2 181.3M482.4 175.5L483.6 167.0M454.2 167.9L481.9 172.8M481.9 172.8L511.8 178.2M544.8 182.8L542.0 173.2M542.0 173.2L539.5 164.8M529.4 164.1L558.8 168.8M558.8 168.8L590.5 173.8M590.5 173.8L618.0 178.1M603.7 176.5L597.4 167.9" stroke="rgb(164, 164, 164)" /><path d="M-3.0 195.6L31.3 184.8M71.0 193.7L101.4 182.7M131.7 196.9L157.7 185.7M157.7 185.7L180.4 175.9M-3.0 188.1L8.2 194.3M205.6 194.5L226.5 183.5M83.6 177.4L97.8 182.9M97.8 182.9L113.1 188.9M113.1 188.9L129.8 195.4M269.2 197.9L285.6 186.6M285.6 186.6L299.8 176.8M195.5 179.2L214.9 185.0M214.9 185.0L235.9 191.4M235.9 191.4L258.8 198.3M341.7 195.5L353.0 184.3M307.3 180.3L331.2 186.2M331.2 186.2L357.3 192.5M408.6 199.1L415.2 187.6M415.2 187.6L420.9 177.7M420.2 181.3L448.8 187.2M448.8 187.2L479.8 193.6M479.5 196.5L481.0 185.3M481.0 185.3L482.4 175.5M511.8 178.2L544.2 184.0M544.2 184.0L579.4 190.2M579.4 190.2L617.7 197.1M548.1 193.8L544.8 182.8M618.0 196.0L610.9 186.3M610.9 186.3L603.7 176.5" stroke="rgb(169, 169, 169)" /><path d="M35.7 206.5L71.0 193.7M101.3 210.0L131.7 196.9M8.2 194.3L20.9 201.3M20.9 201.3L34.9 209.0M34.9 209.0L50.1 217.4M181.4 207.5L205.6 194.5M129.8 195.4L148.0 202.5M148.0 202.5L167.8 210.2M250.2 211.1L269.2 197.9M258.8 198.3L283.9 205.8M283.9 205.8L311.4 214.1M328.6 208.5L341.7 195.5M357.3 192.5L385.6 199.5M385.6 199.5L416.6 207.1M416.6 207.1L450.7 215.4M401.0 212.3L408.6 199.1M479.8 193.6L513.7 200.6M513.7 200.6L550.7 208.2M550.7 208.2L591.3 216.6M477.7 209.6L479.5 196.5M617.7 197.1L618.0 197.1M551.9 206.7L548.1 193.8" stroke="rgb(173, 173, 173)" /><path d="M-3.0 220.6L35.7 206.5M22.8 243.9L65.6 225.5M65.6 225.5L101.3 210.0M50.1 217.4L67.0 226.7M67.0 226.7L85.7 237.0M118.5 240.9L152.8 222.7M152.8 222.7L181.4 207.5M167.8 210.2L189.6 218.7M189.6 218.7L213.7 228.1M213.7 228.1L240.4 238.5M227.7 226.7L250.2 211.1M311.4 214.1L341.8 223.2M341.8 223.2L375.5 233.4M294.6 242.1L313.1 223.8M313.1 223.8L328.6 208.5M450.7 215.4L488.2 224.7M488.2 224.7L529.9 234.9M392.0 228.0L401.0 212.3M591.3 216.6L618.0 222.2M472.9 243.4L475.5 225.0M475.5 225.0L477.7 209.6M561.8 240.0L556.4 221.8M556.4 221.8L551.9 206.7" stroke="rgb(178, 178, 178)" /><path d="M-3.0 295.9L11.4 309.6M11.4 309.6L34.7 331.6M34.7 331.6L43.6 340.0M-3.0 255.1L22.8 243.9M85.7 237.0L106.6 248.5M106.6 248.5L130.0 261.5M130.0 261.5L156.4 276.1M156.4 276.1L186.6 292.7M186.6 292.7L221.2 311.9M221.2 311.9L261.5 334.1M261.5 334.1L272.2 340.0M-3.0 305.5L25.0 290.6M25.0 290.6L76.9 263.0M76.9 263.0L118.5 240.9M240.4 238.5L270.2 250.1M270.2 250.1L303.6 263.1M303.6 263.1L341.3 277.8M341.3 277.8L384.4 294.6M384.4 294.6L433.8 313.8M433.8 313.8L491.3 336.2M491.3 336.2L501.0 340.0M63.9 340.0L75.5 332.0M75.5 332.0L127.5 296.0M127.5 296.0L168.2 267.9M168.2 267.9L200.9 245.2M200.9 245.2L227.7 226.7M375.5 233.4L413.1 244.7M413.1 244.7L455.2 257.4M455.2 257.4L502.9 271.7M502.9 271.7L557.2 288.1M557.2 288.1L618.0 306.3M195.7 340.0L208.3 327.5M208.3 327.5L244.1 292.1M244.1 292.1L272.1 264.4M272.1 264.4L294.6 242.1M529.9 234.9L576.4 246.3M576.4 246.3L618.0 256.5M327.6 340.0L331.0 334.0M331.0 334.0L351.8 297.8M351.8 297.8L368.1 269.5M368.1 269.5L381.2 246.7M381.2 246.7L392.0 228.0M459.4 340.0L460.9 329.4M460.9 329.4L465.9 293.7M465.9 293.7L469.8 265.8M469.8 265.8L472.9 243.4M591.3 340.0L586.8 324.6M586.8 324.6L576.4 289.5M576.4 289.5L568.3 262.0M568.3 262.0L561.8 240.0" stroke="rgb(182, 182, 182)" /></g></svg>
<svg class="a" style="left:768px;top:183px" width="38" height="68" viewBox="0 0 38 68"><ellipse cx="20.4" cy="5.6" rx="4.6" ry="3.6" fill="#e0c090" stroke="#241a18" stroke-width="1.2"/><path d="M28 26C32 30 31 36 28.5 40" stroke="#241a18" stroke-width="3.2" fill="none"/><path d="M28 26C32 30 31 36 28.5 40" stroke="#c89060" stroke-width="1.8" fill="none"/><path d="M20 8C12 8 6.5 13 6.8 21C7 26 9 29.5 12 31H28C31 29.5 33 26 32.5 21C32.5 13 27 8 20 8Z" fill="#d09a6c" stroke="#241a18" stroke-width="1.3"/><path d="M9 18C12 11 19 10 20 16C21 10 28 11 31 18C28 15 23 15 20 19C17 15 12 15 9 18Z" fill="#e8c49a"/><path d="M13.5 21C16 19.5 18.5 19 20 21C21.5 19 24 19.5 26.2 21V29C24 30.5 16 30.5 13.5 29Z" fill="#f0d0b0"/><rect x="14" y="23" width="2" height="3" fill="#2a9a8a"/><rect x="23.5" y="23" width="2" height="3" fill="#2a9a8a"/><rect x="19" y="27" width="2.5" height="1" fill="#fff"/><rect x="12.5" y="31" width="13.7" height="4" fill="#c02828" stroke="#241a18" stroke-width="0.8"/><rect x="17" y="32" width="5" height="2" fill="#f0e0e0"/><path d="M9 35H30L33 47L29 52H10L6 47Z" fill="#1e2438" stroke="#241a18" stroke-width="1"/><rect x="17" y="35" width="5" height="10" fill="#3a3a4a"/><path d="M5.6 37C7 35 10.5 35 11 37V45H5.6Z" fill="#b0b0b0" stroke="#241a18" stroke-width="0.8"/><path d="M28 37C28.5 35 34 35 35.2 37V45H28Z" fill="#b0b0b0" stroke="#241a18" stroke-width="0.8"/><rect x="10" y="34.5" width="5" height="3" fill="#d8b040"/><rect x="24" y="34.5" width="5" height="3" fill="#d8b040"/><rect x="11" y="42" width="17" height="2" fill="#b83030"/><ellipse cx="6" cy="48" rx="3.2" ry="3.5" fill="#e8b888" stroke="#241a18" stroke-width="0.9"/><ellipse cx="33" cy="48" rx="3.2" ry="3.5" fill="#e8b888" stroke="#241a18" stroke-width="0.9"/><path d="M10 46H29L27 52H12Z" fill="#d8b838"/><rect x="18" y="47" width="3" height="2" fill="#c03030"/><rect x="12" y="52" width="5" height="5" fill="#e8c8a0"/><rect x="22" y="52" width="5" height="5" fill="#e8c8a0"/><path d="M10.5 56H17.5V64L16 66H11L10.5 64Z" fill="#1a1a22" stroke="#241a18" stroke-width="0.9"/><path d="M21 56H28V64L27.5 66H22.5L21 64Z" fill="#1a1a22" stroke="#241a18" stroke-width="0.9"/><rect x="13" y="58" width="1.6" height="5" fill="#d8b040"/><rect x="23.5" y="58" width="1.6" height="5" fill="#d8b040"/></svg>
<div class="a" style="left:480px;top:392px;width:615px;height:4px;background:#fff"></div>
<div class="hdr" style="left:480px;top:396px;width:615px">Motion List</div>
<div class="a" style="left:484px;top:422px;width:115px;height:24px;background:#f7f7f7;border:1px solid #e3e3e3;border-radius:4px"></div>
<svg class="a" style="left:488px;top:423px" width="22" height="22" viewBox="0 0 22 22"><circle cx="11" cy="11" r="11" fill="#1877e0"/><path d="M9 5H13V9H17V13H13V17H9V13H5V9H9Z" fill="#fff"/></svg>
<div class="t" style="left:515px;top:426px;letter-spacing:0.45px">Add Motion</div>
<div class="a" style="left:603px;top:422px;width:24px;height:24px;background:#f7f7f7;border:1px solid #e3e3e3;border-radius:4px"></div>
<svg class="a" style="left:606px;top:425px" width="18" height="18" viewBox="0 0 18 18"><rect x="6.5" y="1" width="5" height="2" fill="#5b5b5b"/><rect x="1" y="2.5" width="16" height="2" fill="#5b5b5b"/><path d="M2 6H16L15 17H3Z" fill="#5b5b5b"/><rect x="6" y="7.5" width="1" height="6" fill="#fff"/><rect x="8.5" y="7.5" width="1" height="6.5" fill="#fff"/><rect x="11" y="7.5" width="1" height="6" fill="#fff"/></svg>
<div class="a" style="left:483px;top:456px;width:92px;height:19px;background:#0078d7"></div>
<div class="t" style="left:486px;top:458px;color:#fff;letter-spacing:0.5px">Walk</div>
<div class="t" style="left:578px;top:458px;color:#000;letter-spacing:0.5px">Wait</div>
<div class="t" style="left:670px;top:458px;color:#000;letter-spacing:0.5px">run</div>
<div class="t" style="left:762px;top:458px;color:#000;letter-spacing:0.5px">wait2</div>
<div class="t" style="left:854px;top:458px;color:#000;letter-spacing:0.5px">item</div>
<div class="t" style="left:946px;top:458px;color:#000;letter-spacing:0.5px">skill_wait</div>
<div class="t" style="left:486px;top:480px;color:#000;letter-spacing:0.5px">skill</div>
<div class="t" style="left:578px;top:480px;color:#000;letter-spacing:0.5px">guard</div>
<div class="t" style="left:670px;top:480px;color:#000;letter-spacing:0.5px">damage</div>
<div class="t" style="left:762px;top:480px;color:#000;letter-spacing:0.5px">LessHP</div>
<div class="t" style="left:854px;top:480px;color:#000;letter-spacing:0.5px">KO</div>
<div class="t" style="left:946px;top:480px;color:#000;letter-spacing:0.5px">win</div>
<div class="t" style="left:486px;top:502px;color:#000;letter-spacing:0.5px">bed</div>
<div class="t" style="left:578px;top:502px;color:#000;letter-spacing:0.5px">attack_A_01</div>
<div class="t" style="left:670px;top:502px;color:#000;letter-spacing:0.5px">attack_A_02</div>
<div class="t" style="left:762px;top:502px;color:#000;letter-spacing:0.5px">attack_A_03</div>
<div class="t" style="left:854px;top:502px;color:#000;letter-spacing:0.5px">attack_A_04</div>
<div class="t" style="left:946px;top:502px;color:#000;letter-spacing:0.5px">attack_A_05</div>
<div class="t" style="left:486px;top:524px;color:#000;letter-spacing:0.5px">attack_B_01</div>
<div class="t" style="left:578px;top:524px;color:#000;letter-spacing:0.5px">attack_B_02</div>
<div class="t" style="left:670px;top:524px;color:#000;letter-spacing:0.5px">attack_B_03</div>
<div class="t" style="left:762px;top:524px;color:#000;letter-spacing:0.5px">attack_C_01</div>
<div class="t" style="left:854px;top:524px;color:#000;letter-spacing:0.5px">attack_D_01</div>
<div class="t" style="left:946px;top:524px;color:#000;letter-spacing:0.5px">attack_D_02</div>
<div class="t" style="left:486px;top:546px;color:#000;letter-spacing:0.5px">attack_E_01</div>
<div class="t" style="left:578px;top:546px;color:#000;letter-spacing:0.5px">attack</div>
<div class="a" style="left:1095px;top:34px;width:4px;height:681px;background:#fff"></div>
<div class="hdr" style="left:1099px;top:34px;width:504px">Slice Animation Settings</div>
<div class="a" style="left:1099px;top:55px;width:504px;height:365px;background:#a0a0a0"></div>
<div class="a" style="left:1100px;top:56px;width:502px;height:19px;background:#c08c00"></div>
<div class="t" style="left:1105px;top:59px;color:#fff;letter-spacing:0.3px">Name</div>
<div class="a" style="left:1100px;top:76px;width:502px;height:19px;background:#f5efd4"></div>
<div class="t" style="left:1103px;top:79px;color:#000;letter-spacing:0.3px">Hero B</div>
<div class="a" style="left:1100px;top:97px;width:502px;height:33px;background:#f5efd4"></div>
<div class="a" style="left:1102px;top:99px;width:498px;height:29px;background:#c08c00"></div>
<div class="t" style="left:1124px;top:105px;color:#fff;letter-spacing:0.3px">Basic</div>
<div class="a" style="left:1100px;top:131px;width:149px;height:19px;background:#f5efd4"></div>
<div class="a" style="left:1250px;top:131px;width:352px;height:19px;background:#f5efd4"></div>
<div class="t" style="left:1103px;top:134px;color:#000;letter-spacing:0.3px">Scale (%)</div>
<div class="t" style="left:1253px;top:134px;color:#000;letter-spacing:0.3px">150</div>
<div class="a" style="left:1100px;top:151px;width:149px;height:19px;background:#f5efd4"></div>
<div class="a" style="left:1250px;top:151px;width:352px;height:19px;background:#f5efd4"></div>
<div class="t" style="left:1103px;top:154px;color:#000;letter-spacing:0.3px">Billboard Type</div>
<div class="t" style="left:1253px;top:154px;color:#000;letter-spacing:0.3px">Billboard</div>
<div class="a" style="left:1100px;top:172px;width:502px;height:33px;background:#f5efd4"></div>
<div class="a" style="left:1102px;top:174px;width:498px;height:29px;background:#c08c00"></div>
<div class="t" style="left:1124px;top:180px;color:#fff;letter-spacing:0.3px">Motion</div>
<div class="a" style="left:1100px;top:206px;width:149px;height:19px;background:#f5efd4"></div>
<div class="a" style="left:1250px;top:206px;width:352px;height:19px;background:#f5efd4"></div>
<div class="t" style="left:1103px;top:209px;color:#000;letter-spacing:0.3px">Name</div>
<div class="t" style="left:1253px;top:209px;color:#000;letter-spacing:0.3px">Walk</div>
<div class="a" style="left:1100px;top:226px;width:149px;height:19px;background:#e9e9e9"></div>
<div class="a" style="left:1250px;top:226px;width:352px;height:19px;background:#e9e9e9"></div>
<div class="t" style="left:1103px;top:229px;color:#a0a0a0;letter-spacing:0.3px">Texture Name</div>
<div class="t" style="left:1253px;top:229px;color:#a0a0a0;letter-spacing:0.3px">chr002_walk</div>
<div class="a" style="left:1100px;top:246px;width:149px;height:132px;background:#f5efd4"></div>
<div class="a" style="left:1250px;top:246px;width:352px;height:132px;background:#f5efd4"></div>
<div class="t" style="left:1103px;top:305px;color:#000;letter-spacing:0.3px">Texture</div>
<div class="a" style="left:1100px;top:379px;width:149px;height:19px;background:#f5efd4"></div>
<div class="a" style="left:1250px;top:379px;width:352px;height:19px;background:#f5efd4"></div>
<div class="t" style="left:1103px;top:382px;color:#000;letter-spacing:0.3px">Display Time of One...</div>
<div class="t" style="left:1253px;top:382px;color:#000;letter-spacing:0.3px">120</div>
<div class="a" style="left:1100px;top:399px;width:149px;height:19px;background:#f5efd4"></div>
<div class="a" style="left:1250px;top:399px;width:352px;height:19px;background:#f5efd4"></div>
<div class="t" style="left:1103px;top:402px;color:#000;letter-spacing:0.3px">Playback Method</div>
<div class="t" style="left:1253px;top:402px;color:#000;letter-spacing:0.3px">Loop</div>
<div class="a" style="left:1099px;top:418px;width:504px;height:297px;background:#ababab"></div>
<svg class="a" style="left:1106px;top:106px" width="14" height="14" viewBox="0 0 14 14"><circle cx="7" cy="7" r="6" fill="#fff"/><path d="M4 5.5L7 8.5L10 5.5" stroke="#c08c00" stroke-width="2" fill="none"/></svg>
<svg class="a" style="left:1106px;top:181px" width="14" height="14" viewBox="0 0 14 14"><circle cx="7" cy="7" r="6" fill="#fff"/><path d="M4 5.5L7 8.5L10 5.5" stroke="#c08c00" stroke-width="2" fill="none"/></svg>
<svg class="a" style="left:1586px;top:78px" width="14" height="15" viewBox="0 0 14 15"><path d="M9 1L13 5L6 12H3L2 13L1 12L2 11V8Z" fill="#a8a8a8"/><path d="M3.5 9.5L5.5 11.5" stroke="#f5efd4" stroke-width="1"/></svg>
<svg class="a" style="left:1586px;top:208px" width="14" height="15" viewBox="0 0 14 15"><path d="M9 1L13 5L6 12H3L2 13L1 12L2 11V8Z" fill="#a8a8a8"/><path d="M3.5 9.5L5.5 11.5" stroke="#f5efd4" stroke-width="1"/></svg>
<svg class="a" style="left:1586px;top:134px" width="14" height="14" viewBox="0 0 14 14"><circle cx="7" cy="7" r="6.6" fill="#a4a4a4"/><path d="M4.3 5.3L7 2.8L9.7 5.3M4.3 8.7L7 11.2L9.7 8.7" stroke="#f5efd4" stroke-width="1.5" fill="none"/><path d="M3.5 7H10.5" stroke="#f5efd4" stroke-width="1.2"/></svg>
<svg class="a" style="left:1586px;top:382px" width="14" height="14" viewBox="0 0 14 14"><circle cx="7" cy="7" r="6.6" fill="#a4a4a4"/><path d="M4.3 5.3L7 2.8L9.7 5.3M4.3 8.7L7 11.2L9.7 8.7" stroke="#f5efd4" stroke-width="1.5" fill="none"/><path d="M3.5 7H10.5" stroke="#f5efd4" stroke-width="1.2"/></svg>
<svg class="a" style="left:1587px;top:154px" width="14" height="14" viewBox="0 0 14 14"><rect x="0" y="0" width="14" height="14" rx="2" fill="#a8a8a8"/><path d="M2.5 4H11.5L7 9.5Z" fill="#f5efd4"/></svg>
<svg class="a" style="left:1587px;top:402px" width="14" height="14" viewBox="0 0 14 14"><rect x="0" y="0" width="14" height="14" rx="2" fill="#a8a8a8"/><path d="M2.5 4H11.5L7 9.5Z" fill="#f5efd4"/></svg>
<div class="a" style="left:1573px;top:331px;width:28px;height:27px;background:#fff;border-radius:3px"></div>
<svg class="a" style="left:1573px;top:331px" width="28" height="28" viewBox="0 0 28 28"><defs><pattern id="dith4" width="2" height="2" patternUnits="userSpaceOnUse"><rect x="0" y="0" width="1" height="1" fill="#5b5b5b"/><rect x="1" y="1" width="1" height="1" fill="#5b5b5b"/></pattern></defs><rect x="2.4" y="3.2" width="21.2" height="17.7" rx="1" fill="#5b5b5b"/><rect x="4.4" y="5.2" width="17.2" height="13.7" fill="#fff"/><path d="M4.4 18.9V14L7.5 9L13 16.5V18.9Z" fill="url(#dith4)"/><path d="M15 5.2H21.6V14H18V15.5H15.5V13H14.5V10.5H15.5Z" fill="#5b5b5b"/><rect x="17.7" y="7" width="1.3" height="3" fill="#fff"/><path d="M22.5 14.5V22.5H14" stroke="#5b5b5b" stroke-width="2.3" fill="none"/><path d="M11.5 22.5L15.5 19V26Z" fill="#5b5b5b"/></svg>
<svg class="a" style="left:1586px;top:362px" width="14" height="12" viewBox="0 0 14 12"><path d="M1 6H12M7 1.5L12 6L7 10.5" stroke="#a4a4a4" stroke-width="1.9" fill="none"/></svg>
<svg class="a" style="left:1255.0px;top:270.0px" width="12" height="20" viewBox="0 0 12 20"><path d="M6 0.5L9.2 4.5L9 9H3L2.8 4.5Z" fill="#e4bca4" stroke="#5a3a34" stroke-width="0.7"/><rect x="5" y="5" width="2" height="2.5" fill="#fff"/><path d="M2.5 9H9.5L10 14.5H2Z" fill="#3e3440" stroke="#5a3a34" stroke-width="0.5"/><rect x="4.5" y="9" width="3" height="1.2" fill="#c84040"/><rect x="0.8" y="10" width="1.8" height="3.5" fill="#e8c0a0"/><rect x="9.4" y="10" width="1.8" height="3.5" fill="#e8c0a0"/><rect x="2.5" y="12.5" width="7" height="1.2" fill="#d8b848"/><rect x="3.2" y="14.5" width="2.2" height="4" fill="#4a3a30"/><rect x="6.6" y="14.5" width="2.2" height="4" fill="#4a3a30"/><rect x="3" y="17.5" width="2.6" height="1.3" fill="#c0a040"/><rect x="6.4" y="17.5" width="2.6" height="1.3" fill="#c0a040"/></svg>
<svg class="a" style="left:1276.3px;top:270.0px" width="12" height="20" viewBox="0 0 12 20"><path d="M6 0.5L9.2 4.5L9 9H3L2.8 4.5Z" fill="#e4bca4" stroke="#5a3a34" stroke-width="0.7"/><rect x="5" y="5" width="2" height="2.5" fill="#fff"/><path d="M2.5 9H9.5L10 14.5H2Z" fill="#3e3440" stroke="#5a3a34" stroke-width="0.5"/><rect x="4.5" y="9" width="3" height="1.2" fill="#c84040"/><rect x="0.8" y="10" width="1.8" height="3.5" fill="#e8c0a0"/><rect x="9.4" y="10" width="1.8" height="3.5" fill="#e8c0a0"/><rect x="2.5" y="12.5" width="7" height="1.2" fill="#d8b848"/><rect x="3.2" y="14.5" width="2.2" height="4" fill="#4a3a30"/><rect x="6.6" y="14.5" width="2.2" height="4" fill="#4a3a30"/><rect x="3" y="17.5" width="2.6" height="1.3" fill="#c0a040"/><rect x="6.4" y="17.5" width="2.6" height="1.3" fill="#c0a040"/></svg>
<svg class="a" style="left:1297.6px;top:270.0px" width="12" height="20" viewBox="0 0 12 20"><path d="M6 0.5L9.2 4.5L9 9H3L2.8 4.5Z" fill="#e4bca4" stroke="#5a3a34" stroke-width="0.7"/><rect x="5" y="5" width="2" height="2.5" fill="#fff"/><path d="M2.5 9H9.5L10 14.5H2Z" fill="#3e3440" stroke="#5a3a34" stroke-width="0.5"/><rect x="4.5" y="9" width="3" height="1.2" fill="#c84040"/><rect x="0.8" y="10" width="1.8" height="3.5" fill="#e8c0a0"/><rect x="9.4" y="10" width="1.8" height="3.5" fill="#e8c0a0"/><rect x="2.5" y="12.5" width="7" height="1.2" fill="#d8b848"/><rect x="3.2" y="14.5" width="2.2" height="4" fill="#4a3a30"/><rect x="6.6" y="14.5" width="2.2" height="4" fill="#4a3a30"/><rect x="3" y="17.5" width="2.6" height="1.3" fill="#c0a040"/><rect x="6.4" y="17.5" width="2.6" height="1.3" fill="#c0a040"/></svg>
<svg class="a" style="left:1318.9px;top:270.0px" width="12" height="20" viewBox="0 0 12 20"><path d="M6 0.5L9.2 4.5L9 9H3L2.8 4.5Z" fill="#e4bca4" stroke="#5a3a34" stroke-width="0.7"/><rect x="5" y="5" width="2" height="2.5" fill="#fff"/><path d="M2.5 9H9.5L10 14.5H2Z" fill="#3e3440" stroke="#5a3a34" stroke-width="0.5"/><rect x="4.5" y="9" width="3" height="1.2" fill="#c84040"/><rect x="0.8" y="10" width="1.8" height="3.5" fill="#e8c0a0"/><rect x="9.4" y="10" width="1.8" height="3.5" fill="#e8c0a0"/><rect x="2.5" y="12.5" width="7" height="1.2" fill="#d8b848"/><rect x="3.2" y="14.5" width="2.2" height="4" fill="#4a3a30"/><rect x="6.6" y="14.5" width="2.2" height="4" fill="#4a3a30"/><rect x="3" y="17.5" width="2.6" height="1.3" fill="#c0a040"/><rect x="6.4" y="17.5" width="2.6" height="1.3" fill="#c0a040"/></svg>
<svg class="a" style="left:1340.2px;top:270.0px" width="12" height="20" viewBox="0 0 12 20"><path d="M6 0.5L9.2 4.5L9 9H3L2.8 4.5Z" fill="#e4bca4" stroke="#5a3a34" stroke-width="0.7"/><rect x="5" y="5" width="2" height="2.5" fill="#fff"/><path d="M2.5 9H9.5L10 14.5H2Z" fill="#3e3440" stroke="#5a3a34" stroke-width="0.5"/><rect x="4.5" y="9" width="3" height="1.2" fill="#c84040"/><rect x="0.8" y="10" width="1.8" height="3.5" fill="#e8c0a0"/><rect x="9.4" y="10" width="1.8" height="3.5" fill="#e8c0a0"/><rect x="2.5" y="12.5" width="7" height="1.2" fill="#d8b848"/><rect x="3.2" y="14.5" width="2.2" height="4" fill="#4a3a30"/><rect x="6.6" y="14.5" width="2.2" height="4" fill="#4a3a30"/><rect x="3" y="17.5" width="2.6" height="1.3" fill="#c0a040"/><rect x="6.4" y="17.5" width="2.6" height="1.3" fill="#c0a040"/></svg>
<svg class="a" style="left:1361.5px;top:270.0px" width="12" height="20" viewBox="0 0 12 20"><path d="M6 0.5L9.2 4.5L9 9H3L2.8 4.5Z" fill="#e4bca4" stroke="#5a3a34" stroke-width="0.7"/><rect x="5" y="5" width="2" height="2.5" fill="#fff"/><path d="M2.5 9H9.5L10 14.5H2Z" fill="#3e3440" stroke="#5a3a34" stroke-width="0.5"/><rect x="4.5" y="9" width="3" height="1.2" fill="#c84040"/><rect x="0.8" y="10" width="1.8" height="3.5" fill="#e8c0a0"/><rect x="9.4" y="10" width="1.8" height="3.5" fill="#e8c0a0"/><rect x="2.5" y="12.5" width="7" height="1.2" fill="#d8b848"/><rect x="3.2" y="14.5" width="2.2" height="4" fill="#4a3a30"/><rect x="6.6" y="14.5" width="2.2" height="4" fill="#4a3a30"/><rect x="3" y="17.5" width="2.6" height="1.3" fill="#c0a040"/><rect x="6.4" y="17.5" width="2.6" height="1.3" fill="#c0a040"/></svg>
<svg class="a" style="left:1255.0px;top:291.5px" width="12" height="20" viewBox="0 0 12 20"><path d="M6 1C9 1 10.5 3 10.5 5.5C10.5 8 8.5 9 6 9C3.5 9 1.5 8 1.5 5.5C1.5 3 3 1 6 1Z" fill="#e0b49c" stroke="#5a3a34" stroke-width="0.7"/><path d="M8 2C11 3 11.5 7 9.5 9.5" stroke="#e0b49c" stroke-width="1.3" fill="none"/><path d="M2.5 9H9.5L10 14.5H2Z" fill="#3e3440" stroke="#5a3a34" stroke-width="0.5"/><rect x="4.5" y="9" width="3" height="1.2" fill="#c84040"/><rect x="0.8" y="10" width="1.8" height="3.5" fill="#e8c0a0"/><rect x="9.4" y="10" width="1.8" height="3.5" fill="#e8c0a0"/><rect x="2.5" y="12.5" width="7" height="1.2" fill="#d8b848"/><rect x="3.2" y="14.5" width="2.2" height="4" fill="#4a3a30"/><rect x="6.6" y="14.5" width="2.2" height="4" fill="#4a3a30"/><rect x="3" y="17.5" width="2.6" height="1.3" fill="#c0a040"/><rect x="6.4" y="17.5" width="2.6" height="1.3" fill="#c0a040"/></svg>
<svg class="a" style="left:1276.3px;top:291.5px" width="12" height="20" viewBox="0 0 12 20"><path d="M6 1C9 1 10.5 3 10.5 5.5C10.5 8 8.5 9 6 9C3.5 9 1.5 8 1.5 5.5C1.5 3 3 1 6 1Z" fill="#e0b49c" stroke="#5a3a34" stroke-width="0.7"/><path d="M8 2C11 3 11.5 7 9.5 9.5" stroke="#e0b49c" stroke-width="1.3" fill="none"/><path d="M2.5 9H9.5L10 14.5H2Z" fill="#3e3440" stroke="#5a3a34" stroke-width="0.5"/><rect x="4.5" y="9" width="3" height="1.2" fill="#c84040"/><rect x="0.8" y="10" width="1.8" height="3.5" fill="#e8c0a0"/><rect x="9.4" y="10" width="1.8" height="3.5" fill="#e8c0a0"/><rect x="2.5" y="12.5" width="7" height="1.2" fill="#d8b848"/><rect x="3.2" y="14.5" width="2.2" height="4" fill="#4a3a30"/><rect x="6.6" y="14.5" width="2.2" height="4" fill="#4a3a30"/><rect x="3" y="17.5" width="2.6" height="1.3" fill="#c0a040"/><rect x="6.4" y="17.5" width="2.6" height="1.3" fill="#c0a040"/></svg>
<svg class="a" style="left:1297.6px;top:291.5px" width="12" height="20" viewBox="0 0 12 20"><path d="M6 1C9 1 10.5 3 10.5 5.5C10.5 8 8.5 9 6 9C3.5 9 1.5 8 1.5 5.5C1.5 3 3 1 6 1Z" fill="#e0b49c" stroke="#5a3a34" stroke-width="0.7"/><path d="M8 2C11 3 11.5 7 9.5 9.5" stroke="#e0b49c" stroke-width="1.3" fill="none"/><path d="M2.5 9H9.5L10 14.5H2Z" fill="#3e3440" stroke="#5a3a34" stroke-width="0.5"/><rect x="4.5" y="9" width="3" height="1.2" fill="#c84040"/><rect x="0.8" y="10" width="1.8" height="3.5" fill="#e8c0a0"/><rect x="9.4" y="10" width="1.8" height="3.5" fill="#e8c0a0"/><rect x="2.5" y="12.5" width="7" height="1.2" fill="#d8b848"/><rect x="3.2" y="14.5" width="2.2" height="4" fill="#4a3a30"/><rect x="6.6" y="14.5" width="2.2" height="4" fill="#4a3a30"/><rect x="3" y="17.5" width="2.6" height="1.3" fill="#c0a040"/><rect x="6.4" y="17.5" width="2.6" height="1.3" fill="#c0a040"/></svg>
<svg class="a" style="left:1318.9px;top:291.5px" width="12" height="20" viewBox="0 0 12 20"><path d="M6 1C9 1 10.5 3 10.5 5.5C10.5 8 8.5 9 6 9C3.5 9 1.5 8 1.5 5.5C1.5 3 3 1 6 1Z" fill="#e0b49c" stroke="#5a3a34" stroke-width="0.7"/><path d="M8 2C11 3 11.5 7 9.5 9.5" stroke="#e0b49c" stroke-width="1.3" fill="none"/><path d="M2.5 9H9.5L10 14.5H2Z" fill="#3e3440" stroke="#5a3a34" stroke-width="0.5"/><rect x="4.5" y="9" width="3" height="1.2" fill="#c84040"/><rect x="0.8" y="10" width="1.8" height="3.5" fill="#e8c0a0"/><rect x="9.4" y="10" width="1.8" height="3.5" fill="#e8c0a0"/><rect x="2.5" y="12.5" width="7" height="1.2" fill="#d8b848"/><rect x="3.2" y="14.5" width="2.2" height="4" fill="#4a3a30"/><rect x="6.6" y="14.5" width="2.2" height="4" fill="#4a3a30"/><rect x="3" y="17.5" width="2.6" height="1.3" fill="#c0a040"/><rect x="6.4" y="17.5" width="2.6" height="1.3" fill="#c0a040"/></svg>
<svg class="a" style="left:1340.2px;top:291.5px" width="12" height="20" viewBox="0 0 12 20"><path d="M6 1C9 1 10.5 3 10.5 5.5C10.5 8 8.5 9 6 9C3.5 9 1.5 8 1.5 5.5C1.5 3 3 1 6 1Z" fill="#e0b49c" stroke="#5a3a34" stroke-width="0.7"/><path d="M8 2C11 3 11.5 7 9.5 9.5" stroke="#e0b49c" stroke-width="1.3" fill="none"/><path d="M2.5 9H9.5L10 14.5H2Z" fill="#3e3440" stroke="#5a3a34" stroke-width="0.5"/><rect x="4.5" y="9" width="3" height="1.2" fill="#c84040"/><rect x="0.8" y="10" width="1.8" height="3.5" fill="#e8c0a0"/><rect x="9.4" y="10" width="1.8" height="3.5" fill="#e8c0a0"/><rect x="2.5" y="12.5" width="7" height="1.2" fill="#d8b848"/><rect x="3.2" y="14.5" width="2.2" height="4" fill="#4a3a30"/><rect x="6.6" y="14.5" width="2.2" height="4" fill="#4a3a30"/><rect x="3" y="17.5" width="2.6" height="1.3" fill="#c0a040"/><rect x="6.4" y="17.5" width="2.6" height="1.3" fill="#c0a040"/></svg>
<svg class="a" style="left:1361.5px;top:291.5px" width="12" height="20" viewBox="0 0 12 20"><path d="M6 1C9 1 10.5 3 10.5 5.5C10.5 8 8.5 9 6 9C3.5 9 1.5 8 1.5 5.5C1.5 3 3 1 6 1Z" fill="#e0b49c" stroke="#5a3a34" stroke-width="0.7"/><path d="M8 2C11 3 11.5 7 9.5 9.5" stroke="#e0b49c" stroke-width="1.3" fill="none"/><path d="M2.5 9H9.5L10 14.5H2Z" fill="#3e3440" stroke="#5a3a34" stroke-width="0.5"/><rect x="4.5" y="9" width="3" height="1.2" fill="#c84040"/><rect x="0.8" y="10" width="1.8" height="3.5" fill="#e8c0a0"/><rect x="9.4" y="10" width="1.8" height="3.5" fill="#e8c0a0"/><rect x="2.5" y="12.5" width="7" height="1.2" fill="#d8b848"/><rect x="3.2" y="14.5" width="2.2" height="4" fill="#4a3a30"/><rect x="6.6" y="14.5" width="2.2" height="4" fill="#4a3a30"/><rect x="3" y="17.5" width="2.6" height="1.3" fill="#c0a040"/><rect x="6.4" y="17.5" width="2.6" height="1.3" fill="#c0a040"/></svg>
<svg class="a" style="left:1255.0px;top:313.0px" width="12" height="20" viewBox="0 0 12 20"><path d="M6 0.5L9.2 4.5L9 9.5H3L2.8 4.5Z" fill="#d8a890" stroke="#5a3a34" stroke-width="0.7"/><path d="M6 2V9" stroke="#f0d0c0" stroke-width="1"/><path d="M2.5 9H9.5L10 14.5H2Z" fill="#3e3440" stroke="#5a3a34" stroke-width="0.5"/><rect x="4.5" y="9" width="3" height="1.2" fill="#c84040"/><rect x="0.8" y="10" width="1.8" height="3.5" fill="#e8c0a0"/><rect x="9.4" y="10" width="1.8" height="3.5" fill="#e8c0a0"/><rect x="2.5" y="12.5" width="7" height="1.2" fill="#d8b848"/><rect x="3.2" y="14.5" width="2.2" height="4" fill="#4a3a30"/><rect x="6.6" y="14.5" width="2.2" height="4" fill="#4a3a30"/><rect x="3" y="17.5" width="2.6" height="1.3" fill="#c0a040"/><rect x="6.4" y="17.5" width="2.6" height="1.3" fill="#c0a040"/></svg>
<svg class="a" style="left:1276.3px;top:313.0px" width="12" height="20" viewBox="0 0 12 20"><path d="M6 0.5L9.2 4.5L9 9.5H3L2.8 4.5Z" fill="#d8a890" stroke="#5a3a34" stroke-width="0.7"/><path d="M6 2V9" stroke="#f0d0c0" stroke-width="1"/><path d="M2.5 9H9.5L10 14.5H2Z" fill="#3e3440" stroke="#5a3a34" stroke-width="0.5"/><rect x="4.5" y="9" width="3" height="1.2" fill="#c84040"/><rect x="0.8" y="10" width="1.8" height="3.5" fill="#e8c0a0"/><rect x="9.4" y="10" width="1.8" height="3.5" fill="#e8c0a0"/><rect x="2.5" y="12.5" width="7" height="1.2" fill="#d8b848"/><rect x="3.2" y="14.5" width="2.2" height="4" fill="#4a3a30"/><rect x="6.6" y="14.5" width="2.2" height="4" fill="#4a3a30"/><rect x="3" y="17.5" width="2.6" height="1.3" fill="#c0a040"/><rect x="6.4" y="17.5" width="2.6" height="1.3" fill="#c0a040"/></svg>
<svg class="a" style="left:1297.6px;top:313.0px" width="12" height="20" viewBox="0 0 12 20"><path d="M6 0.5L9.2 4.5L9 9.5H3L2.8 4.5Z" fill="#d8a890" stroke="#5a3a34" stroke-width="0.7"/><path d="M6 2V9" stroke="#f0d0c0" stroke-width="1"/><path d="M2.5 9H9.5L10 14.5H2Z" fill="#3e3440" stroke="#5a3a34" stroke-width="0.5"/><rect x="4.5" y="9" width="3" height="1.2" fill="#c84040"/><rect x="0.8" y="10" width="1.8" height="3.5" fill="#e8c0a0"/><rect x="9.4" y="10" width="1.8" height="3.5" fill="#e8c0a0"/><rect x="2.5" y="12.5" width="7" height="1.2" fill="#d8b848"/><rect x="3.2" y="14.5" width="2.2" height="4" fill="#4a3a30"/><rect x="6.6" y="14.5" width="2.2" height="4" fill="#4a3a30"/><rect x="3" y="17.5" width="2.6" height="1.3" fill="#c0a040"/><rect x="6.4" y="17.5" width="2.6" height="1.3" fill="#c0a040"/></svg>
<svg class="a" style="left:1318.9px;top:313.0px" width="12" height="20" viewBox="0 0 12 20"><path d="M6 0.5L9.2 4.5L9 9.5H3L2.8 4.5Z" fill="#d8a890" stroke="#5a3a34" stroke-width="0.7"/><path d="M6 2V9" stroke="#f0d0c0" stroke-width="1"/><path d="M2.5 9H9.5L10 14.5H2Z" fill="#3e3440" stroke="#5a3a34" stroke-width="0.5"/><rect x="4.5" y="9" width="3" height="1.2" fill="#c84040"/><rect x="0.8" y="10" width="1.8" height="3.5" fill="#e8c0a0"/><rect x="9.4" y="10" width="1.8" height="3.5" fill="#e8c0a0"/><rect x="2.5" y="12.5" width="7" height="1.2" fill="#d8b848"/><rect x="3.2" y="14.5" width="2.2" height="4" fill="#4a3a30"/><rect x="6.6" y="14.5" width="2.2" height="4" fill="#4a3a30"/><rect x="3" y="17.5" width="2.6" height="1.3" fill="#c0a040"/><rect x="6.4" y="17.5" width="2.6" height="1.3" fill="#c0a040"/></svg>
<svg class="a" style="left:1340.2px;top:313.0px" width="12" height="20" viewBox="0 0 12 20"><path d="M6 0.5L9.2 4.5L9 9.5H3L2.8 4.5Z" fill="#d8a890" stroke="#5a3a34" stroke-width="0.7"/><path d="M6 2V9" stroke="#f0d0c0" stroke-width="1"/><path d="M2.5 9H9.5L10 14.5H2Z" fill="#3e3440" stroke="#5a3a34" stroke-width="0.5"/><rect x="4.5" y="9" width="3" height="1.2" fill="#c84040"/><rect x="0.8" y="10" width="1.8" height="3.5" fill="#e8c0a0"/><rect x="9.4" y="10" width="1.8" height="3.5" fill="#e8c0a0"/><rect x="2.5" y="12.5" width="7" height="1.2" fill="#d8b848"/><rect x="3.2" y="14.5" width="2.2" height="4" fill="#4a3a30"/><rect x="6.6" y="14.5" width="2.2" height="4" fill="#4a3a30"/><rect x="3" y="17.5" width="2.6" height="1.3" fill="#c0a040"/><rect x="6.4" y="17.5" width="2.6" height="1.3" fill="#c0a040"/></svg>
<svg class="a" style="left:1361.5px;top:313.0px" width="12" height="20" viewBox="0 0 12 20"><path d="M6 0.5L9.2 4.5L9 9.5H3L2.8 4.5Z" fill="#d8a890" stroke="#5a3a34" stroke-width="0.7"/><path d="M6 2V9" stroke="#f0d0c0" stroke-width="1"/><path d="M2.5 9H9.5L10 14.5H2Z" fill="#3e3440" stroke="#5a3a34" stroke-width="0.5"/><rect x="4.5" y="9" width="3" height="1.2" fill="#c84040"/><rect x="0.8" y="10" width="1.8" height="3.5" fill="#e8c0a0"/><rect x="9.4" y="10" width="1.8" height="3.5" fill="#e8c0a0"/><rect x="2.5" y="12.5" width="7" height="1.2" fill="#d8b848"/><rect x="3.2" y="14.5" width="2.2" height="4" fill="#4a3a30"/><rect x="6.6" y="14.5" width="2.2" height="4" fill="#4a3a30"/><rect x="3" y="17.5" width="2.6" height="1.3" fill="#c0a040"/><rect x="6.4" y="17.5" width="2.6" height="1.3" fill="#c0a040"/></svg>
<svg class="a" style="left:1255.0px;top:334.5px" width="12" height="20" viewBox="0 0 12 20"><path d="M6 1C9 1 10.5 3 10.5 5.5C10.5 8 8.5 9 6 9C3.5 9 1.5 8 1.5 5.5C1.5 3 3 1 6 1Z" fill="#e0b49c" stroke="#5a3a34" stroke-width="0.7"/><path d="M8 2C11 3 11.5 7 9.5 9.5" stroke="#e0b49c" stroke-width="1.3" fill="none"/><path d="M2.5 9H9.5L10 14.5H2Z" fill="#3e3440" stroke="#5a3a34" stroke-width="0.5"/><rect x="4.5" y="9" width="3" height="1.2" fill="#c84040"/><rect x="0.8" y="10" width="1.8" height="3.5" fill="#e8c0a0"/><rect x="9.4" y="10" width="1.8" height="3.5" fill="#e8c0a0"/><rect x="2.5" y="12.5" width="7" height="1.2" fill="#d8b848"/><rect x="3.2" y="14.5" width="2.2" height="4" fill="#4a3a30"/><rect x="6.6" y="14.5" width="2.2" height="4" fill="#4a3a30"/><rect x="3" y="17.5" width="2.6" height="1.3" fill="#c0a040"/><rect x="6.4" y="17.5" width="2.6" height="1.3" fill="#c0a040"/></svg>
<svg class="a" style="left:1276.3px;top:334.5px" width="12" height="20" viewBox="0 0 12 20"><path d="M6 1C9 1 10.5 3 10.5 5.5C10.5 8 8.5 9 6 9C3.5 9 1.5 8 1.5 5.5C1.5 3 3 1 6 1Z" fill="#e0b49c" stroke="#5a3a34" stroke-width="0.7"/><path d="M8 2C11 3 11.5 7 9.5 9.5" stroke="#e0b49c" stroke-width="1.3" fill="none"/><path d="M2.5 9H9.5L10 14.5H2Z" fill="#3e3440" stroke="#5a3a34" stroke-width="0.5"/><rect x="4.5" y="9" width="3" height="1.2" fill="#c84040"/><rect x="0.8" y="10" width="1.8" height="3.5" fill="#e8c0a0"/><rect x="9.4" y="10" width="1.8" height="3.5" fill="#e8c0a0"/><rect x="2.5" y="12.5" width="7" height="1.2" fill="#d8b848"/><rect x="3.2" y="14.5" width="2.2" height="4" fill="#4a3a30"/><rect x="6.6" y="14.5" width="2.2" height="4" fill="#4a3a30"/><rect x="3" y="17.5" width="2.6" height="1.3" fill="#c0a040"/><rect x="6.4" y="17.5" width="2.6" height="1.3" fill="#c0a040"/></svg>
<svg class="a" style="left:1297.6px;top:334.5px" width="12" height="20" viewBox="0 0 12 20"><path d="M6 1C9 1 10.5 3 10.5 5.5C10.5 8 8.5 9 6 9C3.5 9 1.5 8 1.5 5.5C1.5 3 3 1 6 1Z" fill="#e0b49c" stroke="#5a3a34" stroke-width="0.7"/><path d="M8 2C11 3 11.5 7 9.5 9.5" stroke="#e0b49c" stroke-width="1.3" fill="none"/><path d="M2.5 9H9.5L10 14.5H2Z" fill="#3e3440" stroke="#5a3a34" stroke-width="0.5"/><rect x="4.5" y="9" width="3" height="1.2" fill="#c84040"/><rect x="0.8" y="10" width="1.8" height="3.5" fill="#e8c0a0"/><rect x="9.4" y="10" width="1.8" height="3.5" fill="#e8c0a0"/><rect x="2.5" y="12.5" width="7" height="1.2" fill="#d8b848"/><rect x="3.2" y="14.5" width="2.2" height="4" fill="#4a3a30"/><rect x="6.6" y="14.5" width="2.2" height="4" fill="#4a3a30"/><rect x="3" y="17.5" width="2.6" height="1.3" fill="#c0a040"/><rect x="6.4" y="17.5" width="2.6" height="1.3" fill="#c0a040"/></svg>
<svg class="a" style="left:1318.9px;top:334.5px" width="12" height="20" viewBox="0 0 12 20"><path d="M6 1C9 1 10.5 3 10.5 5.5C10.5 8 8.5 9 6 9C3.5 9 1.5 8 1.5 5.5C1.5 3 3 1 6 1Z" fill="#e0b49c" stroke="#5a3a34" stroke-width="0.7"/><path d="M8 2C11 3 11.5 7 9.5 9.5" stroke="#e0b49c" stroke-width="1.3" fill="none"/><path d="M2.5 9H9.5L10 14.5H2Z" fill="#3e3440" stroke="#5a3a34" stroke-width="0.5"/><rect x="4.5" y="9" width="3" height="1.2" fill="#c84040"/><rect x="0.8" y="10" width="1.8" height="3.5" fill="#e8c0a0"/><rect x="9.4" y="10" width="1.8" height="3.5" fill="#e8c0a0"/><rect x="2.5" y="12.5" width="7" height="1.2" fill="#d8b848"/><rect x="3.2" y="14.5" width="2.2" height="4" fill="#4a3a30"/><rect x="6.6" y="14.5" width="2.2" height="4" fill="#4a3a30"/><rect x="3" y="17.5" width="2.6" height="1.3" fill="#c0a040"/><rect x="6.4" y="17.5" width="2.6" height="1.3" fill="#c0a040"/></svg>
<svg class="a" style="left:1340.2px;top:334.5px" width="12" height="20" viewBox="0 0 12 20"><path d="M6 1C9 1 10.5 3 10.5 5.5C10.5 8 8.5 9 6 9C3.5 9 1.5 8 1.5 5.5C1.5 3 3 1 6 1Z" fill="#e0b49c" stroke="#5a3a34" stroke-width="0.7"/><path d="M8 2C11 3 11.5 7 9.5 9.5" stroke="#e0b49c" stroke-width="1.3" fill="none"/><path d="M2.5 9H9.5L10 14.5H2Z" fill="#3e3440" stroke="#5a3a34" stroke-width="0.5"/><rect x="4.5" y="9" width="3" height="1.2" fill="#c84040"/><rect x="0.8" y="10" width="1.8" height="3.5" fill="#e8c0a0"/><rect x="9.4" y="10" width="1.8" height="3.5" fill="#e8c0a0"/><rect x="2.5" y="12.5" width="7" height="1.2" fill="#d8b848"/><rect x="3.2" y="14.5" width="2.2" height="4" fill="#4a3a30"/><rect x="6.6" y="14.5" width="2.2" height="4" fill="#4a3a30"/><rect x="3" y="17.5" width="2.6" height="1.3" fill="#c0a040"/><rect x="6.4" y="17.5" width="2.6" height="1.3" fill="#c0a040"/></svg>
<svg class="a" style="left:1361.5px;top:334.5px" width="12" height="20" viewBox="0 0 12 20"><path d="M6 1C9 1 10.5 3 10.5 5.5C10.5 8 8.5 9 6 9C3.5 9 1.5 8 1.5 5.5C1.5 3 3 1 6 1Z" fill="#e0b49c" stroke="#5a3a34" stroke-width="0.7"/><path d="M8 2C11 3 11.5 7 9.5 9.5" stroke="#e0b49c" stroke-width="1.3" fill="none"/><path d="M2.5 9H9.5L10 14.5H2Z" fill="#3e3440" stroke="#5a3a34" stroke-width="0.5"/><rect x="4.5" y="9" width="3" height="1.2" fill="#c84040"/><rect x="0.8" y="10" width="1.8" height="3.5" fill="#e8c0a0"/><rect x="9.4" y="10" width="1.8" height="3.5" fill="#e8c0a0"/><rect x="2.5" y="12.5" width="7" height="1.2" fill="#d8b848"/><rect x="3.2" y="14.5" width="2.2" height="4" fill="#4a3a30"/><rect x="6.6" y="14.5" width="2.2" height="4" fill="#4a3a30"/><rect x="3" y="17.5" width="2.6" height="1.3" fill="#c0a040"/><rect x="6.4" y="17.5" width="2.6" height="1.3" fill="#c0a040"/></svg>
<div class="a" style="left:5px;top:720px;width:1598px;height:36px;background:#696969"></div>
<div class="t" style="left:7px;top:729px;color:#fff;letter-spacing:0.72px">Manage all materials used in the game, including 3D models, textures, sprites, images, and sounds. 3D stamps and 2D stamps are also created here.</div>
<div class="a" style="left:1400px;top:726px;width:92px;height:24px;background:#b4b4b4;border-radius:3px;border:1px solid #9a9a9a"></div>
<svg class="a" style="left:1405px;top:729px" width="18" height="18" viewBox="0 0 18 18"><rect width="18" height="18" rx="2" fill="#5b8de8"/><path d="M3.5 9L7 12.5L14.5 5" stroke="#fff" stroke-width="2.2" fill="none"/></svg>
<div class="t" style="left:1430px;top:730px">OK</div>
<div class="a" style="left:1496px;top:726px;width:101px;height:24px;background:#b4b4b4;border-radius:3px;border:1px solid #9a9a9a"></div>
<svg class="a" style="left:1501px;top:729px" width="18" height="18" viewBox="0 0 18 18"><rect width="18" height="18" rx="2" fill="#e0608a"/><path d="M4.5 4.5L13.5 13.5M13.5 4.5L4.5 13.5" stroke="#fff" stroke-width="2.2" fill="none"/></svg>
<div class="t" style="left:1526px;top:730px;letter-spacing:0.3px">Cancel</div>
</body></html>
